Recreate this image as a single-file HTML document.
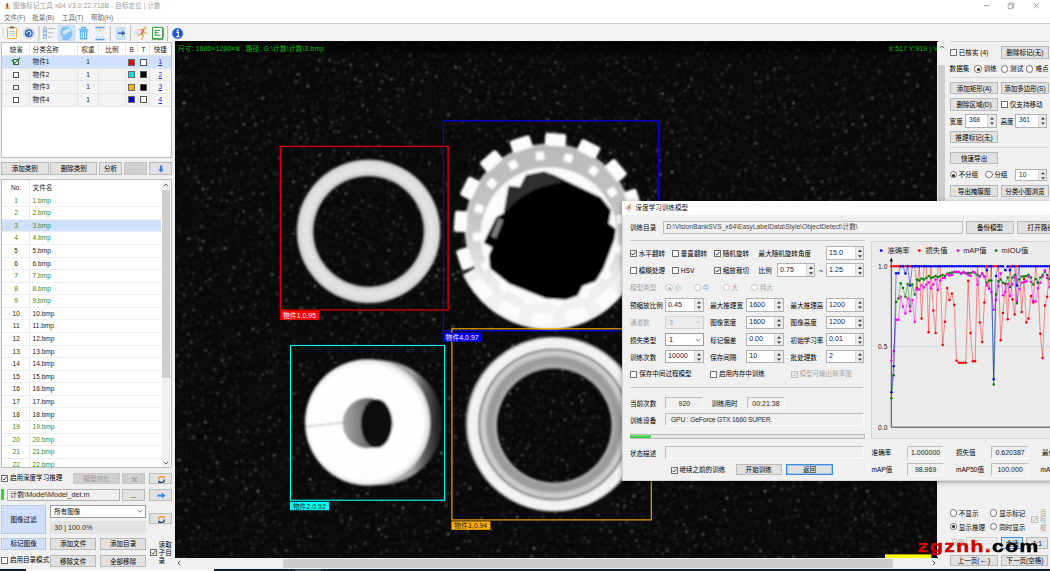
<!DOCTYPE html>
<html lang="zh-CN"><head><meta charset="utf-8"><title>图像标记工具</title>
<style>
*{box-sizing:border-box;margin:0;padding:0}
html,body{width:1050px;height:571px;overflow:hidden;background:#f0f0f0}
body{position:relative;font-family:"Liberation Sans","Noto Sans CJK SC",sans-serif;font-size:6.56px;color:#000}
div{position:absolute;white-space:nowrap}
.t{white-space:nowrap}
.b{background:#e1e1e1;border:1px solid #b9b9b9;text-align:center;overflow:hidden}
.b.dis{background:#cfcfcf;border-color:#c6c6c6;color:#9c9c9c!important}
.b.hot{background:#d5e6fb;border-color:#3c8de0}
.b.foc{background:#e1e1e1;border-color:#3c8de0;box-shadow:inset 0 0 0 .5px #6aa7e8}
.b.blue{background:#cfe0fc;border:1px dotted #9fb6dc}
.ck{border:1px solid #4a4a4a;background:#fff}
.rd{border:1px solid #4a4a4a;background:#fff;border-radius:50%}
.sp{background:#fff;border:1px solid #b2b2b2;overflow:hidden}
.spb{right:0;top:0;width:8.8px;background:#e9e9e9;border-left:1px solid #d8d8d8}
.spb svg{position:absolute;left:0;top:0}
.cb{border:1px solid #9a9a9a;overflow:hidden}
.fd{border:1px solid #bdbdbd;border-right-color:#fafafa;border-bottom-color:#fafafa;overflow:hidden}
svg{position:absolute;overflow:visible}
</style></head><body>
<div style="left:0px;top:0px;width:1050px;height:23.5px;background:#fff"></div>
<svg style="left:3px;top:1.5px" width="9" height="9" viewBox="0 0 9 9"><path d="M1 6.2 L4.4 7.8 L8 6.2 L4.4 5 Z" fill="#d8b98a"/><path d="M3.2 1 L5.2 1.6 L5.4 5.4 L3.6 5.8 Z" fill="#d8342a"/><path d="M2.6 3.2 L4 2.8 L4 5.6 L2.8 5.2 Z" fill="#f08a2a"/></svg>
<div class="t" style="left:13px;top:1.48px;height:9.84px;line-height:9.84px;font-size:6.56px;color:#9a9a9a;letter-spacing:.12px;">图像标记工具 x64 V3.0.22.718B - 目标定位 | 计数</div>
<svg style="left:975px;top:0" width="75" height="12" viewBox="0 0 75 12"><path d="M9 5.6 H14.6" stroke="#8a8a8a" stroke-width=".8" fill="none"/><path d="M33.2 4.2 H37.6 V8.6 H33.2 Z M34.4 4.2 V3 H38.8 V7.4 H37.6" stroke="#8a8a8a" stroke-width=".7" fill="none"/><path d="M58.8 3 L64 8.2 M64 3 L58.8 8.2" stroke="#8a8a8a" stroke-width=".8" fill="none"/></svg>
<div class="t" style="left:4px;top:12.98px;height:9.84px;line-height:9.84px;font-size:6.56px;color:#666;">文件(F)</div>
<div class="t" style="left:32.3px;top:12.98px;height:9.84px;line-height:9.84px;font-size:6.56px;color:#666;">批量(B)</div>
<div class="t" style="left:62px;top:12.98px;height:9.84px;line-height:9.84px;font-size:6.56px;color:#666;">工具(T)</div>
<div class="t" style="left:91px;top:12.98px;height:9.84px;line-height:9.84px;font-size:6.56px;color:#666;">帮助(H)</div>
<div style="left:0px;top:23px;width:1050px;height:1px;background:#cacaca"></div>
<div style="left:0px;top:24.3px;width:1050px;height:17.5px;background:#f3f3f3"></div>
<svg style="left:0;top:24px" width="190" height="18" viewBox="0 0 190 18">
<g fill="#b5b5b5"><rect x="2.6" y="3.5" width="1" height="1"/><rect x="2.6" y="5.7" width="1" height="1"/><rect x="2.6" y="7.9" width="1" height="1"/><rect x="2.6" y="10.1" width="1" height="1"/><rect x="2.6" y="12.3" width="1" height="1"/></g>
<!-- clipboard -->
<rect x="7.6" y="3.6" width="8.8" height="11" rx=".8" fill="#fdf7e6" stroke="#e0a83a" stroke-width="1"/>
<rect x="10" y="2.6" width="4" height="2" rx=".6" fill="#6b6b6b"/>
<path d="M9.6 7.5 H10.8 M11.8 7.5 H14.4 M9.6 9.7 H10.8 M11.8 9.7 H14.4 M9.6 11.9 H10.8 M11.8 11.9 H14.4" stroke="#6f9fd0" stroke-width=".8"/>
<!-- refresh disc -->
<circle cx="28.8" cy="9.4" r="5.6" fill="#e4e4e4" stroke="#c6c6c6" stroke-width=".6"/>
<circle cx="28.8" cy="9.2" r="4" fill="#2c63c7"/>
<path d="M26.8 9.6 A2.1 2.1 0 1 1 29 11.4" stroke="#fff" stroke-width="1" fill="none"/>
<path d="M39 2 V17" stroke="#b4b4b4" stroke-width=".9"/>
<!-- list -->
<g fill="#d6e6f8" stroke="#7aa7dc" stroke-width=".7"><rect x="43.4" y="3.2" width="3.2" height="3"/><rect x="43.4" y="7.4" width="3.2" height="3"/><rect x="43.4" y="11.6" width="3.2" height="3"/></g>
<path d="M48 4.6 H55 M48 8.8 H53.6 M48 13 H52" stroke="#a9a9a9" stroke-width=".8"/>
<!-- head (selected) -->
<rect x="58.4" y="1.4" width="16.4" height="15.6" fill="#cfe4fb" stroke="#8fb8e6" stroke-width=".6" stroke-dasharray="1 .8"/>
<path d="M66.2 2.6 C62 2.6 60 5.6 60.4 8.8 C60.6 10.8 62 12 62.6 13.4 L62.6 16 L69.6 16 L69.6 14 L71.4 13.8 L71.6 11.6 L73 10.6 L71.8 8.6 C71.8 5 69.6 2.6 66.2 2.6 Z" fill="#86bff2"/>
<circle cx="64.6" cy="8.6" r="2" fill="#d3e8fb"/><circle cx="66.8" cy="7.2" r="2" fill="#d3e8fb"/><circle cx="69" cy="6" r="1.8" fill="#d3e8fb"/>
<!-- trash -->
<path d="M78.8 5.2 H88.4 M81.8 5.2 V3.4 H85.4 V5.2" stroke="#4fb0f4" stroke-width="1.1" fill="none"/>
<path d="M79.6 6.2 H87.6 L87 15.6 H80.2 Z" fill="#5ab6f6"/>
<path d="M81.8 7.8 V14 M83.6 7.8 V14 M85.4 7.8 V14" stroke="#d8eefc" stroke-width=".9"/>
<!-- hourglass -->
<path d="M95.4 3.4 H104.6 M95.4 15.4 H104.6" stroke="#5a9ede" stroke-width="1.5"/>
<path d="M96 4.2 H104 C104 7 101.6 8 101.6 9.4 C101.6 10.8 104 11.8 104 14.6 H96 C96 11.8 98.4 10.8 98.4 9.4 C98.4 8 96 7 96 4.2 Z" fill="#f4f8fd" stroke="#a9c8ea" stroke-width=".6"/>
<path d="M98 5.6 H102 L100 8 Z" fill="#f0b8a8"/>
<path d="M97.4 14 C97.8 12.6 99 12 100 11.6 C101 12 102.2 12.6 102.6 14 Z" fill="#dfeaf6"/>
<path d="M110.4 2 V17" stroke="#b4b4b4" stroke-width=".9"/>
<!-- export -->
<rect x="116.2" y="3.2" width="8.6" height="12" fill="#cfe3f8" stroke="#a9cbef" stroke-width=".6"/>
<path d="M117.8 9.2 H122.6" stroke="#3a66b0" stroke-width="1.5"/><path d="M122 6.6 L125.4 9.2 L122 11.8 Z" fill="#3a66b0"/>
<path d="M130.6 2 V17" stroke="#b4b4b4" stroke-width=".9"/>
<!-- runner -->
<path d="M134.4 6.6 H139.4 V11 H134.4 Z" fill="#d4dde8"/>
<circle cx="145" cy="4" r="1.4" fill="#e8c266"/>
<path d="M139 5.8 L143 5.4 L144.4 8.4 L146.6 9.4 M143 5.6 L141.4 9.8 L143.4 11.8 L141.6 15.2 M141.4 9.8 L138.6 11.6" stroke="#e6b84e" stroke-width="1.3" fill="none" stroke-linecap="round"/>
<path d="M143.2 6 L141.8 9.6" stroke="#e8687a" stroke-width="2.2" stroke-linecap="round"/>
<!-- green doc -->
<path d="M152.6 3.4 H162.6 V14.6 H152.6 Z" fill="#fff" stroke="#1e8a2e" stroke-width=".9"/>
<path d="M152.6 12.4 V15.6 H163.4 M163.6 4.4 V14" stroke="#1e8a2e" stroke-width=".7" fill="none"/>
<path d="M155 6.4 H160.4 M155 8.8 H158.6 M155 11.2 H160.4 M155.2 6.4 V11.2" stroke="#1e8a2e" stroke-width=".9"/>
<path d="M167.6 2 V17" stroke="#b4b4b4" stroke-width=".9"/>
<!-- info -->
<circle cx="177.6" cy="9.4" r="5.3" fill="#1e55c8"/><circle cx="177.6" cy="9.4" r="5.3" fill="none" stroke="#6d9ae6" stroke-width=".7"/>
<circle cx="177.6" cy="6.4" r="1" fill="#fff"/><path d="M176.4 8.4 H178.4 V12.4 M176.2 12.6 H179.4" stroke="#fff" stroke-width="1.1" fill="none"/>
</svg>
<div style="left:1px;top:41.6px;width:170.6px;height:116.2px;background:#fff;border:1px solid #b8bec8"></div>
<div style="left:2px;top:68.4px;width:168.6px;height:37.6px;background:#f4f4f4"></div>
<div style="left:29px;top:42.6px;width:1px;height:63.4px;background:#e4e4e4"></div>
<div style="left:77px;top:42.6px;width:1px;height:63.4px;background:#e4e4e4"></div>
<div style="left:98px;top:42.6px;width:1px;height:63.4px;background:#e4e4e4"></div>
<div style="left:125px;top:42.6px;width:1px;height:63.4px;background:#e4e4e4"></div>
<div style="left:137px;top:42.6px;width:1px;height:63.4px;background:#e4e4e4"></div>
<div style="left:149px;top:42.6px;width:1px;height:63.4px;background:#e4e4e4"></div>
<div style="left:2px;top:55.28px;width:168.6px;height:1px;background:#e6e6e6"></div>
<div style="left:2px;top:67.86px;width:168.6px;height:1px;background:#e6e6e6"></div>
<div style="left:2px;top:80.44px;width:168.6px;height:1px;background:#e6e6e6"></div>
<div style="left:2px;top:93.02px;width:168.6px;height:1px;background:#e6e6e6"></div>
<div style="left:2px;top:105.6px;width:168.6px;height:1px;background:#e6e6e6"></div>
<div style="left:2px;top:55.9px;width:168.6px;height:12.2px;background:#cfe0fd"></div>
<div class="t" style="left:2.8px;top:44.68px;height:9.84px;line-height:9.84px;font-size:6.56px;color:#222;width:26.8px;text-align:center;">缺省</div>
<div class="t" style="left:32.6px;top:44.68px;height:9.84px;line-height:9.84px;font-size:6.56px;color:#222;">分类名称</div>
<div class="t" style="left:77.6px;top:44.68px;height:9.84px;line-height:9.84px;font-size:6.56px;color:#222;width:21px;text-align:center;">权重</div>
<div class="t" style="left:98.5px;top:44.68px;height:9.84px;line-height:9.84px;font-size:6.56px;color:#222;width:27px;text-align:center;">比例</div>
<div class="t" style="left:125.8px;top:44.68px;height:9.84px;line-height:9.84px;font-size:6.56px;color:#222;width:12px;text-align:center;">B</div>
<div class="t" style="left:137.6px;top:44.68px;height:9.84px;line-height:9.84px;font-size:6.56px;color:#222;width:12px;text-align:center;">T</div>
<div class="t" style="left:149.8px;top:44.68px;height:9.84px;line-height:9.84px;font-size:6.56px;color:#222;width:21px;text-align:center;">快捷</div>
<div style="left:13px;top:59.4px;width:5.6px;height:5.6px;border:1px solid #555;background:#fff"></div>
<svg style="left:11.4px;top:56.9px" width="10" height="8" viewBox="0 0 10 8"><path d="M.6 3 L3.6 6.4 L9.2 .6" fill="none" stroke="#0a8a1e" stroke-width="1.2"/></svg>
<div class="t" style="left:32.6px;top:57.18px;height:9.84px;line-height:9.84px;font-size:6.56px;color:#222;">物件1</div>
<div class="t" style="left:77.6px;top:57.18px;height:9.84px;line-height:9.84px;font-size:6.56px;color:#222;width:21px;text-align:center;">1</div>
<div style="left:128.3px;top:58.5px;width:7.2px;height:7.2px;background:#f00000;border:1px solid #6a6a6a"></div>
<div style="left:140px;top:58.5px;width:7.2px;height:7.2px;background:#fff;border:1px solid #555"></div>
<div class="t" style="left:149.8px;top:57.18px;height:9.84px;line-height:9.84px;font-size:6.56px;color:#2222cc;width:21px;text-align:center;"><u>1</u></div>
<div style="left:13px;top:71.98px;width:5.6px;height:5.6px;border:1px solid #555;background:#fff"></div>
<div class="t" style="left:32.6px;top:69.76px;height:9.84px;line-height:9.84px;font-size:6.56px;color:#222;">物件2</div>
<div class="t" style="left:77.6px;top:69.76px;height:9.84px;line-height:9.84px;font-size:6.56px;color:#222;width:21px;text-align:center;">1</div>
<div style="left:128.3px;top:71.08px;width:7.2px;height:7.2px;background:#00e8e8;border:1px solid #6a6a6a"></div>
<div style="left:140px;top:71.08px;width:7.2px;height:7.2px;background:#000;border:1px solid #555"></div>
<div class="t" style="left:149.8px;top:69.76px;height:9.84px;line-height:9.84px;font-size:6.56px;color:#2222cc;width:21px;text-align:center;"><u>2</u></div>
<div style="left:13px;top:84.56px;width:5.6px;height:5.6px;border:1px solid #555;background:#fff"></div>
<div class="t" style="left:32.6px;top:82.34px;height:9.84px;line-height:9.84px;font-size:6.56px;color:#222;">物件3</div>
<div class="t" style="left:77.6px;top:82.34px;height:9.84px;line-height:9.84px;font-size:6.56px;color:#222;width:21px;text-align:center;">1</div>
<div style="left:128.3px;top:83.66px;width:7.2px;height:7.2px;background:#ffb400;border:1px solid #6a6a6a"></div>
<div style="left:140px;top:83.66px;width:7.2px;height:7.2px;background:#000;border:1px solid #555"></div>
<div class="t" style="left:149.8px;top:82.34px;height:9.84px;line-height:9.84px;font-size:6.56px;color:#2222cc;width:21px;text-align:center;"><u>3</u></div>
<div style="left:13px;top:97.14px;width:5.6px;height:5.6px;border:1px solid #555;background:#fff"></div>
<div class="t" style="left:32.6px;top:94.92px;height:9.84px;line-height:9.84px;font-size:6.56px;color:#222;">物件4</div>
<div class="t" style="left:77.6px;top:94.92px;height:9.84px;line-height:9.84px;font-size:6.56px;color:#222;width:21px;text-align:center;">1</div>
<div style="left:128.3px;top:96.24px;width:7.2px;height:7.2px;background:#0000f0;border:1px solid #6a6a6a"></div>
<div style="left:140px;top:96.24px;width:7.2px;height:7.2px;background:#fff;border:1px solid #555"></div>
<div class="t" style="left:149.8px;top:94.92px;height:9.84px;line-height:9.84px;font-size:6.56px;color:#2222cc;width:21px;text-align:center;"><u>4</u></div>
<div class="b " style="left:1px;top:162.2px;width:47.6px;height:12.4px;line-height:11.4px;color:#000">添加类别</div>
<div class="b " style="left:50.2px;top:162.2px;width:47.2px;height:12.4px;line-height:11.4px;color:#000">删除类别</div>
<div class="b " style="left:99.2px;top:162.2px;width:22.8px;height:12.4px;line-height:11.4px;color:#000">分析</div>
<div class="b dis" style="left:124px;top:162.2px;width:22.8px;height:12.4px;line-height:11.4px;color:#000"><svg style="left:8.4px;top:2px" width="6" height="8" viewBox="0 0 6 8"><path d="M3 .6 L5.6 3.6 H4 V7.4 H2 V3.6 H.4 Z" fill="#dcdcdc" stroke="#b4b4b4" stroke-width=".5"/></svg></div>
<div class="b " style="left:148.8px;top:162.2px;width:23px;height:12.4px;line-height:11.4px;color:#000"><svg style="left:8.4px;top:1.6px" width="6" height="8" viewBox="0 0 6 8"><path d="M3 7.6 L.2 4.2 H1.9 V.4 H4.1 V4.2 H5.8 Z" fill="#3b78d8"/></svg></div>
<div style="left:1px;top:179.2px;width:170.6px;height:289.2px;background:#fff;border:1px solid #b8bec8"></div>
<div style="left:29px;top:180.2px;width:1px;height:287.2px;background:#e8e8e8"></div>
<div class="t" style="left:2.8px;top:182.88px;height:9.84px;line-height:9.84px;font-size:6.56px;color:#222;width:26.8px;text-align:center;">No.</div>
<div class="t" style="left:32.6px;top:182.88px;height:9.84px;line-height:9.84px;font-size:6.56px;color:#222;">文件名</div>
<div class="t" style="left:2.8px;top:195.68px;height:9.84px;line-height:9.84px;font-size:6.56px;color:#2e8a2e;width:26.8px;text-align:center;">1</div>
<div class="t" style="left:32.6px;top:195.68px;height:9.84px;line-height:9.84px;font-size:6.56px;color:#2e8a2e;">1.bmp</div>
<div style="left:2px;top:206.18px;width:159.4px;height:1px;background:#efefef"></div>
<div class="t" style="left:2.8px;top:208.26px;height:9.84px;line-height:9.84px;font-size:6.56px;color:#2e8a2e;width:26.8px;text-align:center;">2</div>
<div class="t" style="left:32.6px;top:208.26px;height:9.84px;line-height:9.84px;font-size:6.56px;color:#2e8a2e;">2.bmp</div>
<div style="left:2px;top:219.26px;width:159.4px;height:12.2px;background:#cfe0fd"></div>
<div style="left:2px;top:218.76px;width:159.4px;height:1px;background:#efefef"></div>
<div class="t" style="left:2.8px;top:220.84px;height:9.84px;line-height:9.84px;font-size:6.56px;color:#2e8a2e;width:26.8px;text-align:center;">3</div>
<div class="t" style="left:32.6px;top:220.84px;height:9.84px;line-height:9.84px;font-size:6.56px;color:#2e8a2e;">3.bmp</div>
<div style="left:2px;top:231.34px;width:159.4px;height:1px;background:#efefef"></div>
<div class="t" style="left:2.8px;top:233.42px;height:9.84px;line-height:9.84px;font-size:6.56px;color:#2e8a2e;width:26.8px;text-align:center;">4</div>
<div class="t" style="left:32.6px;top:233.42px;height:9.84px;line-height:9.84px;font-size:6.56px;color:#2e8a2e;">4.bmp</div>
<div style="left:2px;top:243.92px;width:159.4px;height:1px;background:#efefef"></div>
<div class="t" style="left:2.8px;top:246px;height:9.84px;line-height:9.84px;font-size:6.56px;color:#222;width:26.8px;text-align:center;">5</div>
<div class="t" style="left:32.6px;top:246px;height:9.84px;line-height:9.84px;font-size:6.56px;color:#222;">5.bmp</div>
<div style="left:2px;top:256.5px;width:159.4px;height:1px;background:#efefef"></div>
<div class="t" style="left:2.8px;top:258.58px;height:9.84px;line-height:9.84px;font-size:6.56px;color:#222;width:26.8px;text-align:center;">6</div>
<div class="t" style="left:32.6px;top:258.58px;height:9.84px;line-height:9.84px;font-size:6.56px;color:#222;">6.bmp</div>
<div style="left:2px;top:269.08px;width:159.4px;height:1px;background:#efefef"></div>
<div class="t" style="left:2.8px;top:271.16px;height:9.84px;line-height:9.84px;font-size:6.56px;color:#2e8a2e;width:26.8px;text-align:center;">7</div>
<div class="t" style="left:32.6px;top:271.16px;height:9.84px;line-height:9.84px;font-size:6.56px;color:#2e8a2e;">7.bmp</div>
<div style="left:2px;top:281.66px;width:159.4px;height:1px;background:#efefef"></div>
<div class="t" style="left:2.8px;top:283.74px;height:9.84px;line-height:9.84px;font-size:6.56px;color:#2e8a2e;width:26.8px;text-align:center;">8</div>
<div class="t" style="left:32.6px;top:283.74px;height:9.84px;line-height:9.84px;font-size:6.56px;color:#2e8a2e;">8.bmp</div>
<div style="left:2px;top:294.24px;width:159.4px;height:1px;background:#efefef"></div>
<div class="t" style="left:2.8px;top:296.32px;height:9.84px;line-height:9.84px;font-size:6.56px;color:#2e8a2e;width:26.8px;text-align:center;">9</div>
<div class="t" style="left:32.6px;top:296.32px;height:9.84px;line-height:9.84px;font-size:6.56px;color:#2e8a2e;">9.bmp</div>
<div style="left:2px;top:306.82px;width:159.4px;height:1px;background:#efefef"></div>
<div class="t" style="left:2.8px;top:308.9px;height:9.84px;line-height:9.84px;font-size:6.56px;color:#222;width:26.8px;text-align:center;">10</div>
<div class="t" style="left:32.6px;top:308.9px;height:9.84px;line-height:9.84px;font-size:6.56px;color:#222;">10.bmp</div>
<div style="left:2px;top:319.4px;width:159.4px;height:1px;background:#efefef"></div>
<div class="t" style="left:2.8px;top:321.48px;height:9.84px;line-height:9.84px;font-size:6.56px;color:#222;width:26.8px;text-align:center;">11</div>
<div class="t" style="left:32.6px;top:321.48px;height:9.84px;line-height:9.84px;font-size:6.56px;color:#222;">11.bmp</div>
<div style="left:2px;top:331.98px;width:159.4px;height:1px;background:#efefef"></div>
<div class="t" style="left:2.8px;top:334.06px;height:9.84px;line-height:9.84px;font-size:6.56px;color:#222;width:26.8px;text-align:center;">12</div>
<div class="t" style="left:32.6px;top:334.06px;height:9.84px;line-height:9.84px;font-size:6.56px;color:#222;">12.bmp</div>
<div style="left:2px;top:344.56px;width:159.4px;height:1px;background:#efefef"></div>
<div class="t" style="left:2.8px;top:346.64px;height:9.84px;line-height:9.84px;font-size:6.56px;color:#222;width:26.8px;text-align:center;">13</div>
<div class="t" style="left:32.6px;top:346.64px;height:9.84px;line-height:9.84px;font-size:6.56px;color:#222;">13.bmp</div>
<div style="left:2px;top:357.14px;width:159.4px;height:1px;background:#efefef"></div>
<div class="t" style="left:2.8px;top:359.22px;height:9.84px;line-height:9.84px;font-size:6.56px;color:#222;width:26.8px;text-align:center;">14</div>
<div class="t" style="left:32.6px;top:359.22px;height:9.84px;line-height:9.84px;font-size:6.56px;color:#222;">14.bmp</div>
<div style="left:2px;top:369.72px;width:159.4px;height:1px;background:#efefef"></div>
<div class="t" style="left:2.8px;top:371.8px;height:9.84px;line-height:9.84px;font-size:6.56px;color:#222;width:26.8px;text-align:center;">15</div>
<div class="t" style="left:32.6px;top:371.8px;height:9.84px;line-height:9.84px;font-size:6.56px;color:#222;">15.bmp</div>
<div style="left:2px;top:382.3px;width:159.4px;height:1px;background:#efefef"></div>
<div class="t" style="left:2.8px;top:384.38px;height:9.84px;line-height:9.84px;font-size:6.56px;color:#222;width:26.8px;text-align:center;">16</div>
<div class="t" style="left:32.6px;top:384.38px;height:9.84px;line-height:9.84px;font-size:6.56px;color:#222;">16.bmp</div>
<div style="left:2px;top:394.88px;width:159.4px;height:1px;background:#efefef"></div>
<div class="t" style="left:2.8px;top:396.96px;height:9.84px;line-height:9.84px;font-size:6.56px;color:#222;width:26.8px;text-align:center;">17</div>
<div class="t" style="left:32.6px;top:396.96px;height:9.84px;line-height:9.84px;font-size:6.56px;color:#222;">17.bmp</div>
<div style="left:2px;top:407.46px;width:159.4px;height:1px;background:#efefef"></div>
<div class="t" style="left:2.8px;top:409.54px;height:9.84px;line-height:9.84px;font-size:6.56px;color:#222;width:26.8px;text-align:center;">18</div>
<div class="t" style="left:32.6px;top:409.54px;height:9.84px;line-height:9.84px;font-size:6.56px;color:#222;">18.bmp</div>
<div style="left:2px;top:420.04px;width:159.4px;height:1px;background:#efefef"></div>
<div class="t" style="left:2.8px;top:422.12px;height:9.84px;line-height:9.84px;font-size:6.56px;color:#2e8a2e;width:26.8px;text-align:center;">19</div>
<div class="t" style="left:32.6px;top:422.12px;height:9.84px;line-height:9.84px;font-size:6.56px;color:#2e8a2e;">19.bmp</div>
<div style="left:2px;top:432.62px;width:159.4px;height:1px;background:#efefef"></div>
<div class="t" style="left:2.8px;top:434.7px;height:9.84px;line-height:9.84px;font-size:6.56px;color:#2e8a2e;width:26.8px;text-align:center;">20</div>
<div class="t" style="left:32.6px;top:434.7px;height:9.84px;line-height:9.84px;font-size:6.56px;color:#2e8a2e;">20.bmp</div>
<div style="left:2px;top:445.2px;width:159.4px;height:1px;background:#efefef"></div>
<div class="t" style="left:2.8px;top:447.28px;height:9.84px;line-height:9.84px;font-size:6.56px;color:#2e8a2e;width:26.8px;text-align:center;">21</div>
<div class="t" style="left:32.6px;top:447.28px;height:9.84px;line-height:9.84px;font-size:6.56px;color:#2e8a2e;">21.bmp</div>
<div style="left:2px;top:457.78px;width:159.4px;height:1px;background:#efefef"></div>
<div class="t" style="left:2.8px;top:459.86px;height:9.84px;line-height:9.84px;font-size:6.56px;color:#2e8a2e;width:26.8px;text-align:center;">22</div>
<div class="t" style="left:32.6px;top:459.86px;height:9.84px;line-height:9.84px;font-size:6.56px;color:#2e8a2e;">22.bmp</div>
<div style="left:1px;top:467.4px;width:170.6px;height:1px;background:#b8bec8"></div>
<div style="left:161.6px;top:180.2px;width:9.2px;height:287.2px;background:#f0f0f0"></div>
<div style="left:162.2px;top:190.1px;width:7.7px;height:187.6px;background:#cdcdcd"></div>
<svg style="left:163.2px;top:182.6px" width="6" height="4" viewBox="0 0 6 4"><path d="M.8 3.2 L3 1 L5.2 3.2" fill="none" stroke="#555" stroke-width=".9"/></svg>
<svg style="left:163.2px;top:461.4px" width="6" height="4" viewBox="0 0 6 4"><path d="M.8 .8 L3 3 L5.2 .8" fill="none" stroke="#555" stroke-width=".9"/></svg>
<div class="ck" style="left:0.9px;top:474.7px;width:7px;height:7px;border-color:#707070;background:#fff"><svg viewBox="0 0 7 7" width="7" height="7" style="position:absolute;left:-1px;top:-1px"><path d="M1.4 3.6 L2.9 5.1 L5.7 1.7" fill="none" stroke="#222" stroke-width="0.9"/></svg></div>
<div class="t" style="left:9.9px;top:473.28px;height:9.84px;line-height:9.84px;font-size:6.56px;color:#000;">启用深度学习推理</div>
<div class="b dis" style="left:73px;top:472.8px;width:47px;height:11.4px;line-height:10.4px;color:#000">模型对比</div>
<div class="b dis" style="left:122px;top:472.8px;width:22.6px;height:11.4px;line-height:10.4px;color:#000"><svg style="left:7.6px;top:1.8px" width="7" height="7" viewBox="0 0 7 7"><path d="M1 1 L6 6 M6 1 L1 6" stroke="#a8a8a8" stroke-width="1.5"/></svg></div>
<div class="b " style="left:149px;top:472.8px;width:22.6px;height:11.4px;line-height:10.4px;color:#000"><svg style="left:6.6px;top:1.2px" width="9" height="9" viewBox="0 0 9 9"><path d="M1.6 4.8 A3 3 0 0 1 7 2.8" stroke="#e9a23b" stroke-width="1.5" fill="none"/><path d="M7.9 1 L7.7 4 L5.2 2.8 Z" fill="#e9a23b"/><path d="M7.4 4.6 A3 3 0 0 1 2 6.4" stroke="#3d4a80" stroke-width="1.5" fill="none"/><path d="M1.1 8.2 L1.3 5.2 L3.8 6.4 Z" fill="#3d4a80"/></svg></div>
<div style="left:1px;top:489.2px;width:2.8px;height:11.2px;background:#1ee01e"></div>
<div class="fd" style="left:6.8px;top:488.6px;width:113.4px;height:12.2px;line-height:9px;text-align:left;color:#2a2a2a;background:#f0f0f0;padding:0 2.2px;font-size:7.2px;border-color:#b0b0b0">计数\Model\Model_det.m</div>
<div class="b " style="left:122px;top:488.8px;width:22.6px;height:12.2px;line-height:11.2px;color:#000">...</div>
<div class="b " style="left:149px;top:488.8px;width:22.6px;height:12.2px;line-height:11.2px;color:#000"><svg style="left:7px;top:2.4px" width="9" height="7" viewBox="0 0 9 7"><path d="M.4 2.4 H4.8 V.4 L8.6 3.5 L4.8 6.6 V4.6 H.4 Z" fill="#3f86e0"/></svg></div>
<div class="b blue" style="left:1.2px;top:505.4px;width:44.8px;height:28.4px;line-height:27.4px;color:#000">图像过滤</div>
<div class="cb" style="left:50.2px;top:504.8px;width:95.8px;height:13.2px;background:#fff;border-color:#9a9a9a"><span style="position:absolute;left:3px;top:0;line-height:11px;color:#000">所有图像</span><svg viewBox="0 0 8 8" width="6" height="6" style="position:absolute;right:2.2px;top:2.6px"><path d="M1.2 2.8 L4 5.6 L6.8 2.8" fill="none" stroke="#555" stroke-width="1"/></svg></div>
<div class="fd" style="left:50.2px;top:521px;width:95.8px;height:12.8px;line-height:12.4px;text-align:left;color:#2a2a2a;background:#e4e4e4;padding:0 3px;font-size:7.2px;border-color:#e4e4e4">30 | 100.0%</div>
<div class="b " style="left:149px;top:512.6px;width:22.6px;height:11.8px;line-height:10.8px;color:#000"><svg style="left:6.6px;top:1.2px" width="9" height="9" viewBox="0 0 9 9"><path d="M1.6 4.8 A3 3 0 0 1 7 2.8" stroke="#e9a23b" stroke-width="1.5" fill="none"/><path d="M7.9 1 L7.7 4 L5.2 2.8 Z" fill="#e9a23b"/><path d="M7.4 4.6 A3 3 0 0 1 2 6.4" stroke="#3d4a80" stroke-width="1.5" fill="none"/><path d="M1.1 8.2 L1.3 5.2 L3.8 6.4 Z" fill="#3d4a80"/></svg></div>
<div class="b blue" style="left:1.2px;top:538px;width:44.8px;height:11.8px;line-height:10.8px;color:#000">标记图像</div>
<div class="b " style="left:50.2px;top:538px;width:45.8px;height:11.8px;line-height:10.8px;color:#000">添加文件</div>
<div class="b " style="left:100.2px;top:538px;width:45.8px;height:11.8px;line-height:10.8px;color:#000">添加目录</div>
<div class="ck" style="left:0.9px;top:556.9px;width:7px;height:7px;border-color:#707070;background:#fff"></div>
<div class="t" style="left:9.9px;top:555.48px;height:9.84px;line-height:9.84px;font-size:6.56px;color:#000;">启用目录模式</div>
<div class="b " style="left:50.2px;top:554.6px;width:45.8px;height:12px;line-height:11px;color:#000">移除文件</div>
<div class="b " style="left:100.2px;top:554.6px;width:45.8px;height:12px;line-height:11px;color:#000">全部移除</div>
<div class="ck" style="left:150px;top:548.9px;width:7px;height:7px;border-color:#707070;background:#fff"><svg viewBox="0 0 7 7" width="7" height="7" style="position:absolute;left:-1px;top:-1px"><path d="M1.4 3.6 L2.9 5.1 L5.7 1.7" fill="none" stroke="#222" stroke-width="0.9"/></svg></div>
<div class="t" style="left:158.6px;top:540.08px;height:9.84px;line-height:9.84px;font-size:6.56px;color:#000;">读取</div>
<div class="t" style="left:158.6px;top:548.18px;height:9.84px;line-height:9.84px;font-size:6.56px;color:#000;">子目</div>
<div class="t" style="left:158.6px;top:556.28px;height:9.84px;line-height:9.84px;font-size:6.56px;color:#000;">录</div>
<svg style="left:0;top:0" width="1050" height="571" viewBox="0 0 1050 571">
<defs>
<filter id="nz" x="0" y="0" width="100%" height="100%" color-interpolation-filters="sRGB">
<feTurbulence type="fractalNoise" baseFrequency="0.42" numOctaves="1" seed="7" result="n"/>
<feColorMatrix in="n" type="matrix" values="8 0 0 0 -5.45  8 0 0 0 -5.45  8 0 0 0 -5.45  0 0 0 0 1" result="s0"/>
<feGaussianBlur in="s0" stdDeviation="0.8" result="s"/>
<feColorMatrix in="n" type="matrix" values="0 0.2 0 0 -0.098  0 0.2 0 0 -0.098  0 0.2 0 0 -0.098  0 0 0 0 1" result="m0"/>
<feGaussianBlur in="m0" stdDeviation="0.8" result="m"/>
<feFlood flood-color="#080808" result="f"/>
<feComposite in="s" in2="m" operator="arithmetic" k1="0" k2="1" k3="1" k4="0" result="sm"/>
<feComposite in="sm" in2="f" operator="arithmetic" k1="0" k2="1" k3="1" k4="0"/>
</filter>
<filter id="b1"><feGaussianBlur stdDeviation="0.8"/></filter>
<filter id="b3"><feGaussianBlur stdDeviation="1.0"/></filter>
<filter id="b2"><feGaussianBlur stdDeviation="1.4"/></filter>
<linearGradient id="vig" x1="0" y1="41.8" x2="0" y2="57.8" gradientUnits="userSpaceOnUse"><stop offset="0" stop-color="#000" stop-opacity=".75"/><stop offset="0.6" stop-color="#000" stop-opacity=".5"/><stop offset="1" stop-color="#000" stop-opacity="0"/></linearGradient>
<clipPath id="wallclip"><path d="M549 226 L372 326 V400 H726 V326 Z"/></clipPath>
<clipPath id="imgclip"><rect x="175.2" y="41.8" width="762" height="516.1"/></clipPath>
<radialGradient id="g1" cx="368.6" cy="231.4" r="71.9" gradientUnits="userSpaceOnUse">
<stop offset="0.765" stop-color="#808080"/><stop offset="0.785" stop-color="#cccccc"/><stop offset="0.85" stop-color="#e4e4e4"/>
<stop offset="0.95" stop-color="#dedede"/><stop offset="0.985" stop-color="#c8c8c8"/><stop offset="1" stop-color="#808080"/></radialGradient>
<linearGradient id="g2side" x1="412" y1="0" x2="443" y2="0" gradientUnits="userSpaceOnUse">
<stop offset="0" stop-color="#a0a0a0"/><stop offset="0.4" stop-color="#5c5c5c"/><stop offset="0.75" stop-color="#303030"/><stop offset="1" stop-color="#141414"/></linearGradient>
<radialGradient id="g2" cx="366" cy="422.5" r="64" gradientUnits="userSpaceOnUse">
<stop offset="0" stop-color="#ffffff"/><stop offset="0.9" stop-color="#fdfdfd"/><stop offset="1" stop-color="#d8d8d8"/></radialGradient>
<linearGradient id="g2h" x1="343" y1="0" x2="372" y2="0" gradientUnits="userSpaceOnUse">
<stop offset="0" stop-color="#a8a8a8"/><stop offset="1" stop-color="#606060"/></linearGradient>
<radialGradient id="g3" cx="554.2" cy="424.5" r="88.5" gradientUnits="userSpaceOnUse">
<stop offset="0.64" stop-color="#8a8a8a"/><stop offset="0.655" stop-color="#b2b2b2"/><stop offset="0.70" stop-color="#9c9c9c"/><stop offset="0.762" stop-color="#9a9a9a"/>
<stop offset="0.775" stop-color="#c6c6c6"/><stop offset="0.832" stop-color="#cecece"/><stop offset="0.842" stop-color="#6e6e6e"/><stop offset="0.852" stop-color="#787878"/>
<stop offset="0.865" stop-color="#f0f0f0"/><stop offset="0.965" stop-color="#f4f4f4"/><stop offset="0.982" stop-color="#a8a8a8"/><stop offset="1" stop-color="#7c7c7c"/></radialGradient>
<linearGradient id="g4body" x1="0" y1="140" x2="0" y2="320" gradientUnits="userSpaceOnUse">
<stop offset="0" stop-color="#b8b8b8"/><stop offset="0.45" stop-color="#c6c6c6"/><stop offset="0.75" stop-color="#e8e8e8"/><stop offset="1" stop-color="#f6f6f6"/></linearGradient>
<linearGradient id="g4in" x1="500" y1="170" x2="600" y2="290" gradientUnits="userSpaceOnUse">
<stop offset="0" stop-color="#8e8e8e"/><stop offset="0.5" stop-color="#3a3a3a"/><stop offset="1" stop-color="#d0d0d0"/></linearGradient>
</defs>
<rect x="175.2" y="41.8" width="762.0" height="516.1" filter="url(#nz)" fill="#0d0d0d"/>
<rect x="175.2" y="41.8" width="762" height="16" fill="url(#vig)"/>
<g clip-path="url(#imgclip)">
<g filter="url(#b1)"><path fill="url(#g1)" fill-rule="evenodd" d="M296.7 231.4 a71.9 71.9 0 1 0 143.8 0 a71.9 71.9 0 1 0 -143.8 0 Z M313.6 231.4 a55 55 0 1 0 110 0 a55 55 0 1 0 -110 0 Z"/></g>
<g filter="url(#b3)">
<ellipse cx="549" cy="233" rx="95.5" ry="96.5" fill="#f1f1f1" clip-path="url(#wallclip)"/>
<circle cx="549.0" cy="228.0" r="84.5" fill="url(#g4body)"/>
<rect x="-10.5" y="-6.4" width="21" height="12.8" rx="2.4" fill="#fbfbfb" transform="translate(555.5 139.7) rotate(4.2)"/>
<rect x="-10.5" y="-6.4" width="21" height="12.8" rx="2.4" fill="#fbfbfb" transform="translate(588.8 148.9) rotate(26.7)"/>
<rect x="-10.5" y="-6.4" width="21" height="12.8" rx="2.4" fill="#fbfbfb" transform="translate(616.0 170.2) rotate(49.2)"/>
<rect x="-10.5" y="-6.4" width="21" height="12.8" rx="2.4" fill="#fbfbfb" transform="translate(633.0 200.2) rotate(71.7)"/>
<rect x="-10.5" y="-6.4" width="21" height="12.8" rx="2.4" fill="#fbfbfb" transform="translate(637.3 234.5) rotate(94.2)"/>
<rect x="-10.5" y="-6.4" width="21" height="12.8" rx="2.4" fill="#fbfbfb" transform="translate(628.1 270.8) rotate(116.7)"/>
<rect x="-10.5" y="-6.4" width="21" height="12.8" rx="2.4" fill="#fbfbfb" transform="translate(606.8 298.0) rotate(139.2)"/>
<rect x="-10.5" y="-6.4" width="21" height="12.8" rx="2.4" fill="#fbfbfb" transform="translate(576.8 315.0) rotate(161.7)"/>
<rect x="-10.5" y="-6.4" width="21" height="12.8" rx="2.4" fill="#fbfbfb" transform="translate(542.5 319.3) rotate(184.2)"/>
<rect x="-10.5" y="-6.4" width="21" height="12.8" rx="2.4" fill="#fbfbfb" transform="translate(509.2 310.1) rotate(206.7)"/>
<rect x="-10.5" y="-6.4" width="21" height="12.8" rx="2.4" fill="#fbfbfb" transform="translate(482.0 288.8) rotate(229.2)"/>
<rect x="-10.5" y="-6.4" width="21" height="12.8" rx="2.4" fill="#fbfbfb" transform="translate(465.0 258.8) rotate(251.7)"/>
<rect x="-10.5" y="-6.4" width="21" height="12.8" rx="2.4" fill="#fbfbfb" transform="translate(460.7 221.5) rotate(274.2)"/>
<rect x="-10.5" y="-6.4" width="21" height="12.8" rx="2.4" fill="#fbfbfb" transform="translate(469.9 188.2) rotate(296.7)"/>
<rect x="-10.5" y="-6.4" width="21" height="12.8" rx="2.4" fill="#fbfbfb" transform="translate(491.2 161.0) rotate(319.2)"/>
<rect x="-10.5" y="-6.4" width="21" height="12.8" rx="2.4" fill="#fbfbfb" transform="translate(521.2 144.0) rotate(341.7)"/>
<rect x="-4.2" y="-4.2" width="8.4" height="8.4" rx="1" fill="#fdfdfd" transform="translate(568.3 158.1) rotate(15.4)"/>
<rect x="-4.2" y="-4.2" width="8.4" height="8.4" rx="1" fill="#fdfdfd" transform="translate(593.6 170.8) rotate(38.0)"/>
<rect x="-4.2" y="-4.2" width="8.4" height="8.4" rx="1" fill="#fdfdfd" transform="translate(612.1 192.2) rotate(60.5)"/>
<rect x="-4.2" y="-4.2" width="8.4" height="8.4" rx="1" fill="#fdfdfd" transform="translate(621.0 219.1) rotate(83.0)"/>
<rect x="-4.2" y="-4.2" width="8.4" height="8.4" rx="1" fill="#fdfdfd" transform="translate(618.9 249.3) rotate(105.5)"/>
<rect x="-4.2" y="-4.2" width="8.4" height="8.4" rx="1" fill="#fdfdfd" transform="translate(606.2 274.6) rotate(128.0)"/>
<rect x="-4.2" y="-4.2" width="8.4" height="8.4" rx="1" fill="#fdfdfd" transform="translate(584.8 293.1) rotate(150.4)"/>
<rect x="-4.2" y="-4.2" width="8.4" height="8.4" rx="1" fill="#fdfdfd" transform="translate(557.9 302.0) rotate(172.9)"/>
<rect x="-4.2" y="-4.2" width="8.4" height="8.4" rx="1" fill="#fdfdfd" transform="translate(529.7 299.9) rotate(195.4)"/>
<rect x="-4.2" y="-4.2" width="8.4" height="8.4" rx="1" fill="#fdfdfd" transform="translate(504.4 287.2) rotate(217.9)"/>
<rect x="-4.2" y="-4.2" width="8.4" height="8.4" rx="1" fill="#fdfdfd" transform="translate(485.9 265.8) rotate(240.4)"/>
<rect x="-4.2" y="-4.2" width="8.4" height="8.4" rx="1" fill="#fdfdfd" transform="translate(477.0 236.9) rotate(262.9)"/>
<rect x="-4.2" y="-4.2" width="8.4" height="8.4" rx="1" fill="#fdfdfd" transform="translate(479.1 208.7) rotate(285.4)"/>
<rect x="-4.2" y="-4.2" width="8.4" height="8.4" rx="1" fill="#fdfdfd" transform="translate(491.8 183.4) rotate(307.9)"/>
<rect x="-4.2" y="-4.2" width="8.4" height="8.4" rx="1" fill="#fdfdfd" transform="translate(513.2 164.9) rotate(330.4)"/>
<rect x="-4.2" y="-4.2" width="8.4" height="8.4" rx="1" fill="#fdfdfd" transform="translate(540.1 156.0) rotate(352.9)"/>
<circle cx="549.0" cy="235.7" r="68.4" fill="#fafafa"/>
<path d="M526.6 176 L543.8 172.4 L553.6 176 L600.2 198.1 L610 210.4 L607.6 223.9 L614.9 229.3 L613.7 238.6 L602.7 268 L595.3 280.3 L581.8 285.2 L576.9 295 L565.9 298.7 L546.2 297.5 L509.4 282.8 L491 268 L489.8 255.8 L493.5 247.2 L484.9 242.3 L497.2 217.7 L504.5 214 L509.4 187 L520.5 188.3 Z" fill="#060606" stroke="#060606" stroke-width="2" stroke-linejoin="round"/>
<path d="M509.4 187 L520.5 188.3 L526.6 176 L543.8 172.4 L553.6 176 L563.4 182.2 Q538 185 520 198 Q510 206 504.5 214 Z" fill="#2e2e2e"/>
<path d="M491 236.2 L498.4 217.8 L503.3 220.2 L496 238.6 Z" fill="#7c7c7c"/>
</g>
<g filter="url(#b1)">
<ellipse cx="379.5" cy="422.6" rx="62.6" ry="62.4" fill="url(#g2side)"/>
<ellipse cx="367.6" cy="422.4" rx="62.6" ry="63.2" fill="url(#g2)"/>
<ellipse cx="367.6" cy="423" rx="25" ry="25.2" fill="url(#g2h)"/>
<ellipse cx="376.6" cy="423.4" rx="15.6" ry="24.4" fill="#080808"/>
<path d="M305.4 426.8 L343 422.6" stroke="#5a5a5a" stroke-width=".6"/>
</g>
<g filter="url(#b1)"><path fill="url(#g3)" fill-rule="evenodd" d="M465.5 424 a88.7 87.6 0 1 0 177.4 0 a88.7 87.6 0 1 0 -177.4 0 Z M496.9 425.7 a57.3 57 0 1 0 114.6 0 a57.3 57 0 1 0 -114.6 0 Z"/></g>
<rect x="280.3" y="146.3" width="167.8" height="163.7" fill="none" stroke="#ff0000" stroke-width="1.1"/>
<rect x="443.4" y="120.8" width="215.0" height="210.0" fill="none" stroke="#0000ff" stroke-width="1.1"/>
<rect x="290.5" y="345.5" width="154.10000000000002" height="154.7" fill="none" stroke="#00ffff" stroke-width="1.1"/>
<rect x="451.9" y="328.8" width="199.39999999999998" height="191.09999999999997" fill="none" stroke="#ffb000" stroke-width="1.1"/>
<rect x="280.2" y="310.6" width="39.0" height="9.399999999999977" fill="#ff0000"/>
<text x="282.9" y="317.8" font-size="6.8" letter-spacing=".08" fill="#fff">物件1,0.95</text>
<rect x="442.8" y="332.6" width="38.39999999999998" height="9.0" fill="#0000ff"/>
<text x="445.5" y="339.6" font-size="6.8" letter-spacing=".08" fill="#fff">物件4,0.97</text>
<rect x="290" y="501.8" width="39" height="8.399999999999977" fill="#00ffff"/>
<text x="292.7" y="508.5" font-size="6.8" letter-spacing=".08" fill="#1a1a1a">物件2,0.92</text>
<rect x="451.4" y="521.4" width="39.0" height="8.399999999999977" fill="#ffb000"/>
<text x="454.09999999999997" y="528.0999999999999" font-size="6.8" letter-spacing=".08" fill="#1a1a1a">物件3,0.94</text>
<text x="178" y="50.6" font-size="6.56" fill="#00c400" letter-spacing=".28">尺寸: 1600×1200×8&#160;&#160;&#160;路径: G:\计数\计数\3.bmp</text>
<text x="888.6" y="50.6" font-size="6.56" fill="#00c400" letter-spacing=".28">X:517 Y:919 | V</text>
<rect x="885" y="554.4" width="46.4" height="4" fill="#ffff00"/>
</g></svg>
<div style="left:937.2px;top:41.8px;width:8.6px;height:515.4px;background:#f0f0f0"></div>
<div style="left:937.8px;top:64.8px;width:7.6px;height:300px;background:#cdcdcd"></div>
<svg style="left:938.6px;top:44.6px" width="6" height="4" viewBox="0 0 6 4"><path d="M.8 3.2 L3 1 L5.2 3.2" fill="none" stroke="#555" stroke-width=".9"/></svg>
<div style="left:175.2px;top:557.9px;width:770.6px;height:10.7px;background:#f0f0f0"></div>
<div style="left:283px;top:558.6px;width:610px;height:9.2px;background:#cdcdcd"></div>
<svg style="left:176.8px;top:559.6px" width="4" height="6" viewBox="0 0 4 6"><path d="M3.2 .8 L1 3 L3.2 5.2" fill="none" stroke="#444" stroke-width=".9"/></svg>
<svg style="left:931.6px;top:559.6px" width="4" height="6" viewBox="0 0 4 6"><path d="M.8 .8 L3 3 L.8 5.2" fill="none" stroke="#444" stroke-width=".9"/></svg>
<div style="left:950px;top:41.2px;width:98.6px;height:1px;background:#d2d2d2"></div>
<div class="ck" style="left:950.2px;top:48.9px;width:7px;height:7px;border-color:#707070;background:#fff"></div>
<div class="t" style="left:958.8px;top:48.28px;height:9.84px;line-height:9.84px;font-size:6.56px;color:#000;">已核实 (4)</div>
<div class="b " style="left:1001.2px;top:46.2px;width:47.4px;height:12.4px;line-height:11.4px;color:#000">删除标记(无)</div>
<div class="t" style="left:949.6px;top:64.08px;height:9.84px;line-height:9.84px;font-size:6.56px;color:#000;">数据集</div>
<div class="rd" style="left:974.4px;top:65.4px;width:7.2px;height:7.2px;border-color:#707070"><i style="position:absolute;left:1.5px;top:1.5px;width:3.2px;height:3.2px;border-radius:50%;background:#222"></i></div>
<div class="t" style="left:983.7px;top:64.08px;height:9.84px;line-height:9.84px;font-size:6.56px;color:#000;">训练</div>
<div class="rd" style="left:1000.8px;top:65.4px;width:7.2px;height:7.2px;border-color:#707070"></div>
<div class="t" style="left:1010.1px;top:64.08px;height:9.84px;line-height:9.84px;font-size:6.56px;color:#000;">测试</div>
<div class="rd" style="left:1026.2px;top:65.4px;width:7.2px;height:7.2px;border-color:#707070"></div>
<div class="t" style="left:1035.5px;top:64.08px;height:9.84px;line-height:9.84px;font-size:6.56px;color:#000;">难点</div>
<div style="left:950px;top:77.2px;width:98.6px;height:1px;background:#d2d2d2"></div>
<div class="b " style="left:950.4px;top:82.2px;width:47.4px;height:12.2px;line-height:11.2px;color:#000">添加矩形(A)</div>
<div class="b " style="left:1001.2px;top:82.2px;width:47.4px;height:12.2px;line-height:11.2px;color:#000">添加多边形(S)</div>
<div class="b " style="left:950.4px;top:98.4px;width:47.4px;height:12.2px;line-height:11.2px;color:#000">删除区域(D)</div>
<div class="ck" style="left:1001.2px;top:100.9px;width:7px;height:7px;border-color:#707070;background:#fff"></div>
<div class="t" style="left:1009.8px;top:100.38px;height:9.84px;line-height:9.84px;font-size:6.56px;color:#000;">仅支持移动</div>
<div class="t" style="left:949.6px;top:116.98px;height:9.84px;line-height:9.84px;font-size:6.56px;color:#000;">宽度</div>
<div class="sp" style="left:965.4px;top:114.4px;width:31.8px;height:13.2px"><span style="position:absolute;left:2.6px;top:0px;line-height:10.8px;color:#1a1a4a;font-size:6.56px">368</span><div class="spb" style="height:11.2px"><svg viewBox="0 0 8 12" width="8" height="11.2" preserveAspectRatio="none"><path d="M2 4.8 L4 2.5 L6 4.8 Z M2 8 L4 10.3 L6 8 Z" fill="#333"/></svg></div></div>
<div class="t" style="left:1000.4px;top:116.98px;height:9.84px;line-height:9.84px;font-size:6.56px;color:#000;">高度</div>
<div class="sp" style="left:1015.4px;top:114.4px;width:32px;height:13.2px"><span style="position:absolute;left:2.6px;top:0px;line-height:10.8px;color:#1a1a4a;font-size:6.56px">361</span><div class="spb" style="height:11.2px"><svg viewBox="0 0 8 12" width="8" height="11.2" preserveAspectRatio="none"><path d="M2 4.8 L4 2.5 L6 4.8 Z M2 8 L4 10.3 L6 8 Z" fill="#333"/></svg></div></div>
<div class="b " style="left:950.4px;top:131px;width:47.4px;height:12px;line-height:11px;color:#000">推理标记(无)</div>
<div style="left:950px;top:147.2px;width:98.6px;height:1px;background:#d2d2d2"></div>
<div class="b " style="left:950.4px;top:152.2px;width:47.4px;height:12.2px;line-height:11.2px;color:#000">快速导出</div>
<div class="rd" style="left:949.6px;top:171px;width:7.2px;height:7.2px;border-color:#707070"><i style="position:absolute;left:1.5px;top:1.5px;width:3.2px;height:3.2px;border-radius:50%;background:#222"></i></div>
<div class="t" style="left:958.4px;top:169.68px;height:9.84px;line-height:9.84px;font-size:6.56px;color:#000;">不分组</div>
<div class="rd" style="left:985.4px;top:171px;width:7.2px;height:7.2px;border-color:#707070"></div>
<div class="t" style="left:994.2px;top:169.68px;height:9.84px;line-height:9.84px;font-size:6.56px;color:#000;">分组</div>
<div class="sp" style="left:1015.4px;top:168.6px;width:32px;height:12.8px"><span style="position:absolute;left:2.6px;top:0px;line-height:10.4px;color:#1a1a4a;font-size:6.56px">10</span><div class="spb" style="height:10.8px"><svg viewBox="0 0 8 12" width="8" height="10.8" preserveAspectRatio="none"><path d="M2 4.8 L4 2.5 L6 4.8 Z M2 8 L4 10.3 L6 8 Z" fill="#333"/></svg></div></div>
<div class="b " style="left:950.4px;top:184.6px;width:47.4px;height:12.4px;line-height:11.4px;color:#000">导出掩膜图</div>
<div class="b " style="left:1001.2px;top:184.6px;width:47.4px;height:12.4px;line-height:11.4px;color:#000">分类小图浏览</div>
<div class="rd" style="left:949.8px;top:509.4px;width:7.2px;height:7.2px;border-color:#707070"></div>
<div class="t" style="left:958.8px;top:509.18px;height:9.84px;line-height:9.84px;font-size:6.56px;color:#000;">不显示</div>
<div class="rd" style="left:990.2px;top:509.4px;width:7.2px;height:7.2px;border-color:#707070"></div>
<div class="t" style="left:999.2px;top:509.18px;height:9.84px;line-height:9.84px;font-size:6.56px;color:#000;">显示标记</div>
<div class="rd" style="left:949.8px;top:522.8px;width:7.2px;height:7.2px;border-color:#707070"><i style="position:absolute;left:1.5px;top:1.5px;width:3.2px;height:3.2px;border-radius:50%;background:#222"></i></div>
<div class="t" style="left:958.8px;top:522.58px;height:9.84px;line-height:9.84px;font-size:6.56px;color:#000;">显示推理</div>
<div class="rd" style="left:990.2px;top:522.8px;width:7.2px;height:7.2px;border-color:#707070"></div>
<div class="t" style="left:999.2px;top:522.58px;height:9.84px;line-height:9.84px;font-size:6.56px;color:#000;">同时显示</div>
<div class="ck" style="left:1031.2px;top:515.7px;width:7px;height:7px;border-color:#bdbdbd;background:#ececec"><svg viewBox="0 0 7 7" width="7" height="7" style="position:absolute;left:-1px;top:-1px"><path d="M1.4 3.6 L2.9 5.1 L5.7 1.7" fill="none" stroke="#b8b8b8" stroke-width="0.9"/></svg></div>
<div class="t" style="left:1040px;top:507.58px;height:9.84px;line-height:9.84px;font-size:6.56px;color:#a6a6a6;">目</div>
<div class="t" style="left:1040px;top:515.08px;height:9.84px;line-height:9.84px;font-size:6.56px;color:#a6a6a6;">标</div>
<div class="t" style="left:1040px;top:522.58px;height:9.84px;line-height:9.84px;font-size:6.56px;color:#a6a6a6;">框</div>
<div class="t" style="left:951.4px;top:538.08px;height:9.84px;line-height:9.84px;font-size:6.56px;color:#a6a6a6;">尺度</div>
<div class="cb" style="left:965.8px;top:537px;width:31.6px;height:12.2px;background:#ececec;border-color:#d0d0d0"><span style="position:absolute;left:3px;top:0;line-height:10px;color:#a0a0a0">1:1</span><svg viewBox="0 0 8 8" width="6" height="6" style="position:absolute;right:2.2px;top:2.1px"><path d="M1.2 2.8 L4 5.6 L6.8 2.8" fill="none" stroke="#b5b5b5" stroke-width="1"/></svg></div>
<div class="b hot" style="left:1001.2px;top:537px;width:22.2px;height:12.2px;line-height:11.2px;color:#000">合适</div>
<div class="b " style="left:1026.2px;top:537px;width:22.2px;height:12.2px;line-height:11.2px;color:#000">1:1</div>
<div class="b " style="left:950.4px;top:554.6px;width:47.2px;height:11.8px;line-height:10.8px;color:#000">上一页(<span style="font-size:8.6px;line-height:1px">←</span>)</div>
<div class="b " style="left:1001.4px;top:554.6px;width:47px;height:11.8px;line-height:10.8px;color:#000">下一页(空格)</div>
<div style="left:621.8px;top:200.6px;width:429.6px;height:280.8px;background:#f0f0f0;border:1px solid #d6d6d6;box-shadow:0 1px 5px rgba(0,0,0,.4)"></div>
<div style="left:622.4px;top:201px;width:427.6px;height:14px;background:#fff"></div>
<svg style="left:625.2px;top:204px" width="7" height="8" viewBox="0 0 7 8"><rect x=".2" y="2.6" width="3" height="2.6" fill="#cdd8e6"/><circle cx="5.2" cy="1.2" r=".9" fill="#e98a2c"/><path d="M2.2 2.4 L4.4 2 L5 3.8 L6.6 4.2 M4.4 2.2 L3.6 4.6 L4.8 5.6 L4 7.6 M3.6 4.6 L1.8 5.6" stroke="#eea03a" stroke-width=".9" fill="none" stroke-linecap="round"/><path d="M4.2 2.6 L3.8 4.4" stroke="#d2443a" stroke-width="1.2" stroke-linecap="round"/></svg>
<div class="t" style="left:635.6px;top:203.08px;height:9.84px;line-height:9.84px;font-size:6.56px;color:#111;">深度学习训练模型</div>
<div class="t" style="left:630px;top:222.88px;height:9.84px;line-height:9.84px;font-size:6.56px;color:#000;">训练目录</div>
<div class="fd" style="left:663px;top:221.2px;width:299.6px;height:13.2px;line-height:10.6px;text-align:left;color:#444;background:#f0f0f0;padding:0 2.4px;font-size:6.7px;border-color:#bcbcbc">D:\VisionBankSVS_x64\EasyLabelData\Style\ObjectDetect\计数\</div>
<div class="b " style="left:966.4px;top:221.4px;width:47.2px;height:12.2px;line-height:11.2px;color:#000">备份模型</div>
<div class="b " style="left:1017.4px;top:221.4px;width:46.6px;height:12.2px;line-height:11.2px;color:#000">打开路径</div>
<div style="left:630px;top:240px;width:234.6px;height:1px;background:#c6c6c6"></div>
<div class="ck" style="left:630px;top:250.1px;width:7px;height:7px;border-color:#707070;background:#fff"><svg viewBox="0 0 7 7" width="7" height="7" style="position:absolute;left:-1px;top:-1px"><path d="M1.4 3.6 L2.9 5.1 L5.7 1.7" fill="none" stroke="#222" stroke-width="0.9"/></svg></div>
<div class="t" style="left:638.8px;top:248.68px;height:9.84px;line-height:9.84px;font-size:6.56px;color:#000;">水平翻转</div>
<div class="ck" style="left:672px;top:250.1px;width:7px;height:7px;border-color:#707070;background:#fff"></div>
<div class="t" style="left:680.8px;top:248.68px;height:9.84px;line-height:9.84px;font-size:6.56px;color:#000;">垂直翻转</div>
<div class="ck" style="left:714px;top:250.1px;width:7px;height:7px;border-color:#707070;background:#fff"><svg viewBox="0 0 7 7" width="7" height="7" style="position:absolute;left:-1px;top:-1px"><path d="M1.4 3.6 L2.9 5.1 L5.7 1.7" fill="none" stroke="#222" stroke-width="0.9"/></svg></div>
<div class="t" style="left:722.8px;top:248.68px;height:9.84px;line-height:9.84px;font-size:6.56px;color:#000;">随机旋转</div>
<div class="t" style="left:758.6px;top:248.68px;height:9.84px;line-height:9.84px;font-size:6.56px;color:#000;">最大随机旋转角度</div>
<div class="sp" style="left:826.3px;top:246.3px;width:38px;height:14.2px"><span style="position:absolute;left:1.8px;top:0.4px;line-height:11.8px;color:#1a1a4a;font-size:7.1px">15.0</span><div class="spb" style="height:12.2px"><svg viewBox="0 0 8 12" width="8" height="12.2" preserveAspectRatio="none"><path d="M2 4.8 L4 2.5 L6 4.8 Z M2 8 L4 10.3 L6 8 Z" fill="#333"/></svg></div></div>
<div class="ck" style="left:630px;top:267.1px;width:7px;height:7px;border-color:#707070;background:#fff"></div>
<div class="t" style="left:638.8px;top:265.68px;height:9.84px;line-height:9.84px;font-size:6.56px;color:#000;">模糊处理</div>
<div class="ck" style="left:672px;top:267.1px;width:7px;height:7px;border-color:#707070;background:#fff"></div>
<div class="t" style="left:680.8px;top:265.68px;height:9.84px;line-height:9.84px;font-size:6.56px;color:#000;">HSV</div>
<div class="ck" style="left:714px;top:267.1px;width:7px;height:7px;border-color:#707070;background:#fff"><svg viewBox="0 0 7 7" width="7" height="7" style="position:absolute;left:-1px;top:-1px"><path d="M1.4 3.6 L2.9 5.1 L5.7 1.7" fill="none" stroke="#222" stroke-width="0.9"/></svg></div>
<div class="t" style="left:722.8px;top:265.68px;height:9.84px;line-height:9.84px;font-size:6.56px;color:#000;">缩放裁切</div>
<div class="t" style="left:758.6px;top:265.68px;height:9.84px;line-height:9.84px;font-size:6.56px;color:#000;">比例</div>
<div class="sp" style="left:777.3px;top:263.3px;width:38.1px;height:14.2px"><span style="position:absolute;left:1.8px;top:0.4px;line-height:11.8px;color:#1a1a4a;font-size:7.1px">0.75</span><div class="spb" style="height:12.2px"><svg viewBox="0 0 8 12" width="8" height="12.2" preserveAspectRatio="none"><path d="M2 4.8 L4 2.5 L6 4.8 Z M2 8 L4 10.3 L6 8 Z" fill="#333"/></svg></div></div>
<div class="t" style="left:818px;top:264.85px;height:13.5px;line-height:13.5px;font-size:9px;color:#555;">~</div>
<div class="sp" style="left:826.3px;top:263.3px;width:38px;height:14.2px"><span style="position:absolute;left:1.8px;top:0.4px;line-height:11.8px;color:#1a1a4a;font-size:7.1px">1.25</span><div class="spb" style="height:12.2px"><svg viewBox="0 0 8 12" width="8" height="12.2" preserveAspectRatio="none"><path d="M2 4.8 L4 2.5 L6 4.8 Z M2 8 L4 10.3 L6 8 Z" fill="#333"/></svg></div></div>
<div class="t" style="left:630px;top:283.08px;height:9.84px;line-height:9.84px;font-size:6.56px;color:#a6a6a6;">模型类型</div>
<div class="rd" style="left:665.4px;top:284px;width:7.2px;height:7.2px;border-color:#c4c4c4"><i style="position:absolute;left:1.5px;top:1.5px;width:3.2px;height:3.2px;border-radius:50%;background:#b0b0b0"></i></div>
<div class="t" style="left:674.4px;top:282.68px;height:9.84px;line-height:9.84px;font-size:6.56px;color:#a6a6a6;">小</div>
<div class="rd" style="left:693.8px;top:284px;width:7.2px;height:7.2px;border-color:#c4c4c4"></div>
<div class="t" style="left:702.8px;top:282.68px;height:9.84px;line-height:9.84px;font-size:6.56px;color:#a6a6a6;">中</div>
<div class="rd" style="left:722.6px;top:284px;width:7.2px;height:7.2px;border-color:#c4c4c4"></div>
<div class="t" style="left:731.6px;top:282.68px;height:9.84px;line-height:9.84px;font-size:6.56px;color:#a6a6a6;">大</div>
<div class="rd" style="left:751px;top:284px;width:7.2px;height:7.2px;border-color:#c4c4c4"></div>
<div class="t" style="left:760px;top:282.68px;height:9.84px;line-height:9.84px;font-size:6.56px;color:#a6a6a6;">特大</div>
<div class="t" style="left:630px;top:300.98px;height:9.84px;line-height:9.84px;font-size:6.56px;color:#000;">预缩放比例</div>
<div class="sp" style="left:665.3px;top:298.3px;width:38.4px;height:13.4px"><span style="position:absolute;left:1.8px;top:0.4px;line-height:11px;color:#1a1a4a;font-size:7.1px">0.45</span><div class="spb" style="height:11.4px"><svg viewBox="0 0 8 12" width="8" height="11.4" preserveAspectRatio="none"><path d="M2 4.8 L4 2.5 L6 4.8 Z M2 8 L4 10.3 L6 8 Z" fill="#333"/></svg></div></div>
<div class="t" style="left:710.2px;top:300.98px;height:9.84px;line-height:9.84px;font-size:6.56px;color:#000;">最大推理宽</div>
<div class="sp" style="left:746.4px;top:298.3px;width:37.5px;height:13.4px"><span style="position:absolute;left:1.8px;top:0.4px;line-height:11px;color:#1a1a4a;font-size:7.1px">1600</span><div class="spb" style="height:11.4px"><svg viewBox="0 0 8 12" width="8" height="11.4" preserveAspectRatio="none"><path d="M2 4.8 L4 2.5 L6 4.8 Z M2 8 L4 10.3 L6 8 Z" fill="#333"/></svg></div></div>
<div class="t" style="left:790.6px;top:300.98px;height:9.84px;line-height:9.84px;font-size:6.56px;color:#000;">最大推理高</div>
<div class="sp" style="left:826.3px;top:298.3px;width:38px;height:13.4px"><span style="position:absolute;left:1.8px;top:0.4px;line-height:11px;color:#1a1a4a;font-size:7.1px">1200</span><div class="spb" style="height:11.4px"><svg viewBox="0 0 8 12" width="8" height="11.4" preserveAspectRatio="none"><path d="M2 4.8 L4 2.5 L6 4.8 Z M2 8 L4 10.3 L6 8 Z" fill="#333"/></svg></div></div>
<div class="t" style="left:630px;top:318.38px;height:9.84px;line-height:9.84px;font-size:6.56px;color:#a6a6a6;">通道数</div>
<div class="cb" style="left:665.3px;top:315.7px;width:38.4px;height:13.4px;background:#ececec;border-color:#d0d0d0"><span style="position:absolute;left:3px;top:0;line-height:11.2px;color:#a0a0a0">3</span><svg viewBox="0 0 8 8" width="6" height="6" style="position:absolute;right:2.2px;top:2.7px"><path d="M1.2 2.8 L4 5.6 L6.8 2.8" fill="none" stroke="#b5b5b5" stroke-width="1"/></svg></div>
<div class="t" style="left:710.2px;top:318.38px;height:9.84px;line-height:9.84px;font-size:6.56px;color:#000;">图像宽度</div>
<div class="sp" style="left:746.4px;top:315.7px;width:37.5px;height:13.4px"><span style="position:absolute;left:1.8px;top:0.4px;line-height:11px;color:#1a1a4a;font-size:7.1px">1600</span><div class="spb" style="height:11.4px"><svg viewBox="0 0 8 12" width="8" height="11.4" preserveAspectRatio="none"><path d="M2 4.8 L4 2.5 L6 4.8 Z M2 8 L4 10.3 L6 8 Z" fill="#333"/></svg></div></div>
<div class="t" style="left:790.6px;top:318.38px;height:9.84px;line-height:9.84px;font-size:6.56px;color:#000;">图像高度</div>
<div class="sp" style="left:826.3px;top:315.7px;width:38px;height:13.4px"><span style="position:absolute;left:1.8px;top:0.4px;line-height:11px;color:#1a1a4a;font-size:7.1px">1200</span><div class="spb" style="height:11.4px"><svg viewBox="0 0 8 12" width="8" height="11.4" preserveAspectRatio="none"><path d="M2 4.8 L4 2.5 L6 4.8 Z M2 8 L4 10.3 L6 8 Z" fill="#333"/></svg></div></div>
<div class="t" style="left:630px;top:335.58px;height:9.84px;line-height:9.84px;font-size:6.56px;color:#000;">损失类型</div>
<div class="cb" style="left:665.3px;top:332.9px;width:38.4px;height:13.4px;background:#fff;border-color:#9a9a9a"><span style="position:absolute;left:3px;top:0;line-height:11.2px;color:#000">1</span><svg viewBox="0 0 8 8" width="6" height="6" style="position:absolute;right:2.2px;top:2.7px"><path d="M1.2 2.8 L4 5.6 L6.8 2.8" fill="none" stroke="#555" stroke-width="1"/></svg></div>
<div class="t" style="left:710.2px;top:335.58px;height:9.84px;line-height:9.84px;font-size:6.56px;color:#000;">标记偏差</div>
<div class="sp" style="left:746.4px;top:332.9px;width:37.5px;height:13.4px"><span style="position:absolute;left:1.8px;top:0.4px;line-height:11px;color:#1a1a4a;font-size:7.1px">0.00</span><div class="spb" style="height:11.4px"><svg viewBox="0 0 8 12" width="8" height="11.4" preserveAspectRatio="none"><path d="M2 4.8 L4 2.5 L6 4.8 Z M2 8 L4 10.3 L6 8 Z" fill="#333"/></svg></div></div>
<div class="t" style="left:790.6px;top:335.58px;height:9.84px;line-height:9.84px;font-size:6.56px;color:#000;">初始学习率</div>
<div class="sp" style="left:826.3px;top:332.9px;width:38px;height:13.4px"><span style="position:absolute;left:1.8px;top:0.4px;line-height:11px;color:#1a1a4a;font-size:7.1px">0.01</span><div class="spb" style="height:11.4px"><svg viewBox="0 0 8 12" width="8" height="11.4" preserveAspectRatio="none"><path d="M2 4.8 L4 2.5 L6 4.8 Z M2 8 L4 10.3 L6 8 Z" fill="#333"/></svg></div></div>
<div class="t" style="left:630px;top:352.78px;height:9.84px;line-height:9.84px;font-size:6.56px;color:#000;">训练次数</div>
<div class="sp" style="left:665.3px;top:350.1px;width:38.4px;height:13.4px"><span style="position:absolute;left:1.8px;top:0.4px;line-height:11px;color:#1a1a4a;font-size:7.1px">10000</span><div class="spb" style="height:11.4px"><svg viewBox="0 0 8 12" width="8" height="11.4" preserveAspectRatio="none"><path d="M2 4.8 L4 2.5 L6 4.8 Z M2 8 L4 10.3 L6 8 Z" fill="#333"/></svg></div></div>
<div class="t" style="left:710.2px;top:352.78px;height:9.84px;line-height:9.84px;font-size:6.56px;color:#000;">保存间隔</div>
<div class="sp" style="left:746.4px;top:350.1px;width:37.5px;height:13.4px"><span style="position:absolute;left:1.8px;top:0.4px;line-height:11px;color:#1a1a4a;font-size:7.1px">10</span><div class="spb" style="height:11.4px"><svg viewBox="0 0 8 12" width="8" height="11.4" preserveAspectRatio="none"><path d="M2 4.8 L4 2.5 L6 4.8 Z M2 8 L4 10.3 L6 8 Z" fill="#333"/></svg></div></div>
<div class="t" style="left:790.6px;top:352.78px;height:9.84px;line-height:9.84px;font-size:6.56px;color:#000;">批处理数</div>
<div class="sp" style="left:826.3px;top:350.1px;width:38px;height:13.4px"><span style="position:absolute;left:1.8px;top:0.4px;line-height:11px;color:#1a1a4a;font-size:7.1px">2</span><div class="spb" style="height:11.4px"><svg viewBox="0 0 8 12" width="8" height="11.4" preserveAspectRatio="none"><path d="M2 4.8 L4 2.5 L6 4.8 Z M2 8 L4 10.3 L6 8 Z" fill="#333"/></svg></div></div>
<div class="ck" style="left:630.4px;top:370.7px;width:7px;height:7px;border-color:#707070;background:#fff"></div>
<div class="t" style="left:639.2px;top:369.28px;height:9.84px;line-height:9.84px;font-size:6.56px;color:#000;">保存中间过程模型</div>
<div class="ck" style="left:710.2px;top:370.7px;width:7px;height:7px;border-color:#707070;background:#fff"></div>
<div class="t" style="left:719px;top:369.28px;height:9.84px;line-height:9.84px;font-size:6.56px;color:#000;">启用内存中训练</div>
<div class="ck" style="left:790.6px;top:370.7px;width:7px;height:7px;border-color:#bdbdbd;background:#ececec"><svg viewBox="0 0 7 7" width="7" height="7" style="position:absolute;left:-1px;top:-1px"><path d="M1.4 3.6 L2.9 5.1 L5.7 1.7" fill="none" stroke="#b8b8b8" stroke-width="0.9"/></svg></div>
<div class="t" style="left:799.4px;top:369.28px;height:9.84px;line-height:9.84px;font-size:6.56px;color:#a6a6a6;">模型可输出概率图</div>
<div style="left:630px;top:387.4px;width:233px;height:1px;background:#c6c6c6"></div>
<div class="t" style="left:630px;top:398.78px;height:9.84px;line-height:9.84px;font-size:6.56px;color:#000;">当前次数</div>
<div class="fd" style="left:665.4px;top:396.6px;width:38px;height:12.8px;line-height:12.2px;text-align:center;color:#2a2a2a;background:#f0f0f0;padding:0 3px;font-size:7px;">920</div>
<div class="t" style="left:711.4px;top:398.78px;height:9.84px;line-height:9.84px;font-size:6.56px;color:#000;">训练用时</div>
<div class="fd" style="left:747.2px;top:396.6px;width:37.6px;height:12.8px;line-height:12.2px;text-align:center;color:#2a2a2a;background:#f0f0f0;padding:0 3px;font-size:7px;">00:21:38</div>
<div class="t" style="left:630px;top:416.28px;height:9.84px;line-height:9.84px;font-size:6.56px;color:#000;">训练设备</div>
<div class="fd" style="left:665.4px;top:413.4px;width:198.8px;height:13px;line-height:12.4px;text-align:left;color:#2a2a2a;background:#f0f0f0;padding:0 4.6px;font-size:6.8px;letter-spacing:-.2px">GPU : GeForce GTX 1660 SUPER</div>
<div style="left:629.8px;top:434px;width:235px;height:4.6px;background:#e6e6e6;border:1px solid #bcbcbc"></div>
<div style="left:630.4px;top:434.6px;width:20.6px;height:3.4px;background:linear-gradient(#7be37b,#2fc42f)"></div>
<div class="t" style="left:630px;top:448.98px;height:9.84px;line-height:9.84px;font-size:6.56px;color:#000;">状态描述</div>
<div class="fd" style="left:665.4px;top:446.2px;width:198.8px;height:12.4px;line-height:10.4px;text-align:left;color:#333;background:#f0f0f0;padding:0 3px;font-size:6.56px;"></div>
<div class="ck" style="left:670.6px;top:466.7px;width:7px;height:7px;border-color:#707070;background:#fff"><svg viewBox="0 0 7 7" width="7" height="7" style="position:absolute;left:-1px;top:-1px"><path d="M1.4 3.6 L2.9 5.1 L5.7 1.7" fill="none" stroke="#222" stroke-width="0.9"/></svg></div>
<div class="t" style="left:679.4px;top:465.28px;height:9.84px;line-height:9.84px;font-size:6.56px;color:#000;">继续之前的训练</div>
<div class="b " style="left:735.6px;top:463.6px;width:46.2px;height:11.8px;line-height:10.8px;color:#000">开始训练</div>
<div class="b foc" style="left:786px;top:463.6px;width:47px;height:11.8px;line-height:10.8px;color:#000">返回</div>
<div style="left:871.4px;top:240.6px;width:200px;height:198.2px;background:#ebebeb;border:1px solid #d4d4d4"></div>
<svg style="left:0;top:0" width="1050" height="571" viewBox="0 0 1050 571">
<circle cx="881.2" cy="250.6" r="1.4" fill="#0000ff"/>
<text x="887.4" y="253.2" font-size="7.4" fill="#222">准确率</text>
<circle cx="919.4" cy="250.6" r="1.4" fill="#ff0000"/>
<text x="925.4" y="253.2" font-size="7.4" fill="#222">损失值</text>
<circle cx="958" cy="250.6" r="1.4" fill="#ff00ff"/>
<text x="963.2" y="253.2" font-size="7.4" fill="#222">mAP值</text>
<circle cx="996.2" cy="250.6" r="1.4" fill="#008000"/>
<text x="1001.6" y="253.2" font-size="7.4" fill="#222">mIOU值</text>
<path d="M891.3 259 V427.2 H1050" fill="none" stroke="#333" stroke-width=".9"/>
<path d="M889.6 261.6 L891.3 257.6 L893 261.6 Z" fill="#111"/>
<path d="M892 346.6 H1050" stroke="#bdbdbd" stroke-width=".9" stroke-dasharray="1.2 1.6"/>
<text x="887.4" y="268.7" font-size="6.7" fill="#1c1c30" text-anchor="end">1.0</text>
<text x="887.4" y="349.1" font-size="6.7" fill="#1c1c30" text-anchor="end">0.5</text>
<text x="887.4" y="429.7" font-size="6.7" fill="#1c1c30" text-anchor="end">0.0</text>
<path d="M891.4 266.2 L893.7 266.2 L896.1 266.2 L898.4 266.2 L900.7 266.2 L903.0 266.2 L905.4 266.2 L907.7 266.2 L910.0 266.2 L912.3 266.2 L914.7 266.2 L917.0 287.9 L919.3 266.2 L921.6 318.5 L924.0 266.2 L926.3 266.2 L928.6 332.2 L930.9 266.2 L933.3 310.5 L935.6 333.0 L937.9 266.2 L940.2 266.2 L942.6 345.1 L944.9 321.7 L947.2 287.9 L949.5 300.0 L951.9 293.6 L954.2 304.8 L956.5 360.7 L958.9 362.8 L961.2 362.8 L963.5 362.8 L965.8 362.8 L968.2 280.7 L970.5 333.0 L972.8 361.2 L975.1 361.2 L977.5 266.2 L979.8 322.5 L982.1 341.9 L984.4 302.4 L986.8 266.2 L989.1 288.7 L991.4 266.2 L993.7 266.2 L996.1 266.2 L998.4 266.2 L1000.7 340.3 L1003.0 312.9 L1005.4 283.9 L1007.7 319.3 L1010.0 266.2 L1012.4 299.2 L1014.7 314.5 L1017.0 266.2 L1019.3 266.2 L1021.7 312.1 L1024.0 279.1 L1026.3 322.5 L1028.6 318.5 L1031.0 296.0 L1033.3 302.4 L1035.6 266.2 L1037.9 283.1 L1040.3 333.8 L1042.6 358.0 L1044.9 305.6 L1047.2 296.8 L1049.6 266.2 L1051.9 327.4 L1054.2 266.2 L1056.5 314.5" fill="none" stroke="#ff0000" stroke-width="0.5" stroke-linejoin="round" opacity=".85"/>
<g fill="#ff0000"><circle cx="891.4" cy="266.2" r="1.25"/><circle cx="893.7" cy="266.2" r="1.25"/><circle cx="896.1" cy="266.2" r="1.25"/><circle cx="898.4" cy="266.2" r="1.25"/><circle cx="900.7" cy="266.2" r="1.25"/><circle cx="903.0" cy="266.2" r="1.25"/><circle cx="905.4" cy="266.2" r="1.25"/><circle cx="907.7" cy="266.2" r="1.25"/><circle cx="910.0" cy="266.2" r="1.25"/><circle cx="912.3" cy="266.2" r="1.25"/><circle cx="914.7" cy="266.2" r="1.25"/><circle cx="917.0" cy="287.9" r="1.25"/><circle cx="919.3" cy="266.2" r="1.25"/><circle cx="921.6" cy="318.5" r="1.25"/><circle cx="924.0" cy="266.2" r="1.25"/><circle cx="926.3" cy="266.2" r="1.25"/><circle cx="928.6" cy="332.2" r="1.25"/><circle cx="930.9" cy="266.2" r="1.25"/><circle cx="933.3" cy="310.5" r="1.25"/><circle cx="935.6" cy="333.0" r="1.25"/><circle cx="937.9" cy="266.2" r="1.25"/><circle cx="940.2" cy="266.2" r="1.25"/><circle cx="942.6" cy="345.1" r="1.25"/><circle cx="944.9" cy="321.7" r="1.25"/><circle cx="947.2" cy="287.9" r="1.25"/><circle cx="949.5" cy="300.0" r="1.25"/><circle cx="951.9" cy="293.6" r="1.25"/><circle cx="954.2" cy="304.8" r="1.25"/><circle cx="956.5" cy="360.7" r="1.25"/><circle cx="958.9" cy="362.8" r="1.25"/><circle cx="961.2" cy="362.8" r="1.25"/><circle cx="963.5" cy="362.8" r="1.25"/><circle cx="965.8" cy="362.8" r="1.25"/><circle cx="968.2" cy="280.7" r="1.25"/><circle cx="970.5" cy="333.0" r="1.25"/><circle cx="972.8" cy="361.2" r="1.25"/><circle cx="975.1" cy="361.2" r="1.25"/><circle cx="977.5" cy="266.2" r="1.25"/><circle cx="979.8" cy="322.5" r="1.25"/><circle cx="982.1" cy="341.9" r="1.25"/><circle cx="984.4" cy="302.4" r="1.25"/><circle cx="986.8" cy="266.2" r="1.25"/><circle cx="989.1" cy="288.7" r="1.25"/><circle cx="991.4" cy="266.2" r="1.25"/><circle cx="993.7" cy="266.2" r="1.25"/><circle cx="996.1" cy="266.2" r="1.25"/><circle cx="998.4" cy="266.2" r="1.25"/><circle cx="1000.7" cy="340.3" r="1.25"/><circle cx="1003.0" cy="312.9" r="1.25"/><circle cx="1005.4" cy="283.9" r="1.25"/><circle cx="1007.7" cy="319.3" r="1.25"/><circle cx="1010.0" cy="266.2" r="1.25"/><circle cx="1012.4" cy="299.2" r="1.25"/><circle cx="1014.7" cy="314.5" r="1.25"/><circle cx="1017.0" cy="266.2" r="1.25"/><circle cx="1019.3" cy="266.2" r="1.25"/><circle cx="1021.7" cy="312.1" r="1.25"/><circle cx="1024.0" cy="279.1" r="1.25"/><circle cx="1026.3" cy="322.5" r="1.25"/><circle cx="1028.6" cy="318.5" r="1.25"/><circle cx="1031.0" cy="296.0" r="1.25"/><circle cx="1033.3" cy="302.4" r="1.25"/><circle cx="1035.6" cy="266.2" r="1.25"/><circle cx="1037.9" cy="283.1" r="1.25"/><circle cx="1040.3" cy="333.8" r="1.25"/><circle cx="1042.6" cy="358.0" r="1.25"/><circle cx="1044.9" cy="305.6" r="1.25"/><circle cx="1047.2" cy="296.8" r="1.25"/><circle cx="1049.6" cy="266.2" r="1.25"/><circle cx="1051.9" cy="327.4" r="1.25"/><circle cx="1054.2" cy="266.2" r="1.25"/><circle cx="1056.5" cy="314.5" r="1.25"/></g>
<path d="M891.4 398.2 L893.7 375.2 L896.1 302.1 L898.4 298.4 L900.7 283.3 L903.0 287.9 L905.4 296.8 L907.7 283.9 L910.0 306.4 L912.3 284.4 L914.7 294.5 L917.0 279.6 L919.3 280.4 L921.6 278.4 L924.0 279.6 L926.3 278.1 L928.6 275.9 L930.9 278.1 L933.3 277.3 L935.6 275.9 L937.9 277.3 L940.2 275.9 L942.6 274.9 L944.9 275.9 L947.2 273.8 L949.5 273.3 L951.9 272.6 L954.2 272.2 L956.5 272.2 L958.9 272.2 L961.2 273.8 L963.5 272.6 L965.8 273.3 L968.2 273.0 L970.5 273.0 L972.8 272.2 L975.1 273.0 L977.5 274.9 L979.8 276.5 L982.1 274.2 L984.4 276.5 L986.8 282.8 L989.1 280.4 L991.4 280.4 L993.7 384.4 L996.1 294.5 L998.4 281.2 L1000.7 279.6 L1003.0 282.8 L1005.4 283.6 L1007.7 277.5 L1010.0 287.1 L1012.4 277.5 L1014.7 274.9 L1017.0 303.2 L1019.3 279.6 L1021.7 276.5 L1024.0 276.5 L1026.3 275.9 L1028.6 274.9 L1031.0 277.5 L1033.3 284.4 L1035.6 279.1 L1037.9 282.8 L1040.3 277.5 L1042.6 274.9 L1044.9 271.8 L1047.2 274.9 L1049.6 279.1 L1051.9 282.3 L1054.2 277.5 L1056.5 275.9" fill="none" stroke="#008000" stroke-width="0.55" stroke-linejoin="round" opacity=".85"/>
<g fill="#008000"><circle cx="891.4" cy="398.2" r="1.25"/><circle cx="893.7" cy="375.2" r="1.25"/><circle cx="896.1" cy="302.1" r="1.25"/><circle cx="898.4" cy="298.4" r="1.25"/><circle cx="900.7" cy="283.3" r="1.25"/><circle cx="903.0" cy="287.9" r="1.25"/><circle cx="905.4" cy="296.8" r="1.25"/><circle cx="907.7" cy="283.9" r="1.25"/><circle cx="910.0" cy="306.4" r="1.25"/><circle cx="912.3" cy="284.4" r="1.25"/><circle cx="914.7" cy="294.5" r="1.25"/><circle cx="917.0" cy="279.6" r="1.25"/><circle cx="919.3" cy="280.4" r="1.25"/><circle cx="921.6" cy="278.4" r="1.25"/><circle cx="924.0" cy="279.6" r="1.25"/><circle cx="926.3" cy="278.1" r="1.25"/><circle cx="928.6" cy="275.9" r="1.25"/><circle cx="930.9" cy="278.1" r="1.25"/><circle cx="933.3" cy="277.3" r="1.25"/><circle cx="935.6" cy="275.9" r="1.25"/><circle cx="937.9" cy="277.3" r="1.25"/><circle cx="940.2" cy="275.9" r="1.25"/><circle cx="942.6" cy="274.9" r="1.25"/><circle cx="944.9" cy="275.9" r="1.25"/><circle cx="947.2" cy="273.8" r="1.25"/><circle cx="949.5" cy="273.3" r="1.25"/><circle cx="951.9" cy="272.6" r="1.25"/><circle cx="954.2" cy="272.2" r="1.25"/><circle cx="956.5" cy="272.2" r="1.25"/><circle cx="958.9" cy="272.2" r="1.25"/><circle cx="961.2" cy="273.8" r="1.25"/><circle cx="963.5" cy="272.6" r="1.25"/><circle cx="965.8" cy="273.3" r="1.25"/><circle cx="968.2" cy="273.0" r="1.25"/><circle cx="970.5" cy="273.0" r="1.25"/><circle cx="972.8" cy="272.2" r="1.25"/><circle cx="975.1" cy="273.0" r="1.25"/><circle cx="977.5" cy="274.9" r="1.25"/><circle cx="979.8" cy="276.5" r="1.25"/><circle cx="982.1" cy="274.2" r="1.25"/><circle cx="984.4" cy="276.5" r="1.25"/><circle cx="986.8" cy="282.8" r="1.25"/><circle cx="989.1" cy="280.4" r="1.25"/><circle cx="991.4" cy="280.4" r="1.25"/><circle cx="993.7" cy="384.4" r="1.25"/><circle cx="996.1" cy="294.5" r="1.25"/><circle cx="998.4" cy="281.2" r="1.25"/><circle cx="1000.7" cy="279.6" r="1.25"/><circle cx="1003.0" cy="282.8" r="1.25"/><circle cx="1005.4" cy="283.6" r="1.25"/><circle cx="1007.7" cy="277.5" r="1.25"/><circle cx="1010.0" cy="287.1" r="1.25"/><circle cx="1012.4" cy="277.5" r="1.25"/><circle cx="1014.7" cy="274.9" r="1.25"/><circle cx="1017.0" cy="303.2" r="1.25"/><circle cx="1019.3" cy="279.6" r="1.25"/><circle cx="1021.7" cy="276.5" r="1.25"/><circle cx="1024.0" cy="276.5" r="1.25"/><circle cx="1026.3" cy="275.9" r="1.25"/><circle cx="1028.6" cy="274.9" r="1.25"/><circle cx="1031.0" cy="277.5" r="1.25"/><circle cx="1033.3" cy="284.4" r="1.25"/><circle cx="1035.6" cy="279.1" r="1.25"/><circle cx="1037.9" cy="282.8" r="1.25"/><circle cx="1040.3" cy="277.5" r="1.25"/><circle cx="1042.6" cy="274.9" r="1.25"/><circle cx="1044.9" cy="271.8" r="1.25"/><circle cx="1047.2" cy="274.9" r="1.25"/><circle cx="1049.6" cy="279.1" r="1.25"/><circle cx="1051.9" cy="282.3" r="1.25"/><circle cx="1054.2" cy="277.5" r="1.25"/><circle cx="1056.5" cy="275.9" r="1.25"/></g>
<path d="M891.4 360.7 L893.7 350.9 L896.1 319.7 L898.4 319.7 L900.7 296.8 L903.0 306.4 L905.4 313.5 L907.7 298.4 L910.0 311.3 L912.3 300.0 L914.7 321.9 L917.0 289.5 L919.3 289.5 L921.6 285.5 L924.0 287.5 L926.3 284.7 L928.6 282.3 L930.9 288.3 L933.3 284.4 L935.6 279.6 L937.9 289.9 L940.2 280.4 L942.6 278.1 L944.9 278.1 L947.2 274.2 L949.5 275.4 L951.9 274.9 L954.2 271.7 L956.5 271.7 L958.9 271.7 L961.2 273.3 L963.5 271.7 L965.8 273.3 L968.2 274.9 L970.5 275.9 L972.8 271.7 L975.1 272.6 L977.5 284.4 L979.8 275.9 L982.1 273.3 L984.4 276.5 L986.8 285.5 L989.1 288.7 L991.4 292.0 L993.7 309.7 L996.1 300.0 L998.4 286.0 L1000.7 273.3 L1003.0 295.2 L1005.4 292.0 L1007.7 283.9 L1010.0 296.1 L1012.4 284.4 L1014.7 277.5 L1017.0 301.0 L1019.3 289.1 L1021.7 282.8 L1024.0 282.0 L1026.3 281.2 L1028.6 276.5 L1031.0 282.0 L1033.3 301.0 L1035.6 301.6 L1037.9 288.3 L1040.3 282.8 L1042.6 276.5 L1044.9 270.2 L1047.2 278.1 L1049.6 287.1 L1051.9 298.4 L1054.2 290.3 L1056.5 282.3" fill="none" stroke="#ff00ff" stroke-width="0.55" stroke-linejoin="round" opacity=".85"/>
<g fill="#ff00ff"><circle cx="891.4" cy="360.7" r="1.25"/><circle cx="893.7" cy="350.9" r="1.25"/><circle cx="896.1" cy="319.7" r="1.25"/><circle cx="898.4" cy="319.7" r="1.25"/><circle cx="900.7" cy="296.8" r="1.25"/><circle cx="903.0" cy="306.4" r="1.25"/><circle cx="905.4" cy="313.5" r="1.25"/><circle cx="907.7" cy="298.4" r="1.25"/><circle cx="910.0" cy="311.3" r="1.25"/><circle cx="912.3" cy="300.0" r="1.25"/><circle cx="914.7" cy="321.9" r="1.25"/><circle cx="917.0" cy="289.5" r="1.25"/><circle cx="919.3" cy="289.5" r="1.25"/><circle cx="921.6" cy="285.5" r="1.25"/><circle cx="924.0" cy="287.5" r="1.25"/><circle cx="926.3" cy="284.7" r="1.25"/><circle cx="928.6" cy="282.3" r="1.25"/><circle cx="930.9" cy="288.3" r="1.25"/><circle cx="933.3" cy="284.4" r="1.25"/><circle cx="935.6" cy="279.6" r="1.25"/><circle cx="937.9" cy="289.9" r="1.25"/><circle cx="940.2" cy="280.4" r="1.25"/><circle cx="942.6" cy="278.1" r="1.25"/><circle cx="944.9" cy="278.1" r="1.25"/><circle cx="947.2" cy="274.2" r="1.25"/><circle cx="949.5" cy="275.4" r="1.25"/><circle cx="951.9" cy="274.9" r="1.25"/><circle cx="954.2" cy="271.7" r="1.25"/><circle cx="956.5" cy="271.7" r="1.25"/><circle cx="958.9" cy="271.7" r="1.25"/><circle cx="961.2" cy="273.3" r="1.25"/><circle cx="963.5" cy="271.7" r="1.25"/><circle cx="965.8" cy="273.3" r="1.25"/><circle cx="968.2" cy="274.9" r="1.25"/><circle cx="970.5" cy="275.9" r="1.25"/><circle cx="972.8" cy="271.7" r="1.25"/><circle cx="975.1" cy="272.6" r="1.25"/><circle cx="977.5" cy="284.4" r="1.25"/><circle cx="979.8" cy="275.9" r="1.25"/><circle cx="982.1" cy="273.3" r="1.25"/><circle cx="984.4" cy="276.5" r="1.25"/><circle cx="986.8" cy="285.5" r="1.25"/><circle cx="989.1" cy="288.7" r="1.25"/><circle cx="991.4" cy="292.0" r="1.25"/><circle cx="993.7" cy="309.7" r="1.25"/><circle cx="996.1" cy="300.0" r="1.25"/><circle cx="998.4" cy="286.0" r="1.25"/><circle cx="1000.7" cy="273.3" r="1.25"/><circle cx="1003.0" cy="295.2" r="1.25"/><circle cx="1005.4" cy="292.0" r="1.25"/><circle cx="1007.7" cy="283.9" r="1.25"/><circle cx="1010.0" cy="296.1" r="1.25"/><circle cx="1012.4" cy="284.4" r="1.25"/><circle cx="1014.7" cy="277.5" r="1.25"/><circle cx="1017.0" cy="301.0" r="1.25"/><circle cx="1019.3" cy="289.1" r="1.25"/><circle cx="1021.7" cy="282.8" r="1.25"/><circle cx="1024.0" cy="282.0" r="1.25"/><circle cx="1026.3" cy="281.2" r="1.25"/><circle cx="1028.6" cy="276.5" r="1.25"/><circle cx="1031.0" cy="282.0" r="1.25"/><circle cx="1033.3" cy="301.0" r="1.25"/><circle cx="1035.6" cy="301.6" r="1.25"/><circle cx="1037.9" cy="288.3" r="1.25"/><circle cx="1040.3" cy="282.8" r="1.25"/><circle cx="1042.6" cy="276.5" r="1.25"/><circle cx="1044.9" cy="270.2" r="1.25"/><circle cx="1047.2" cy="278.1" r="1.25"/><circle cx="1049.6" cy="287.1" r="1.25"/><circle cx="1051.9" cy="298.4" r="1.25"/><circle cx="1054.2" cy="290.3" r="1.25"/><circle cx="1056.5" cy="282.3" r="1.25"/></g>
<path d="M891.4 392.3 L893.7 366.2 L896.1 273.3 L898.4 273.3 L900.7 266.2 L903.0 266.2 L905.4 273.4 L907.7 266.2 L910.0 285.5 L912.3 266.2 L914.7 266.2 L917.0 266.2 L919.3 266.2 L921.6 266.2 L924.0 266.2 L926.3 266.2 L928.6 266.2 L930.9 266.2 L933.3 266.2 L935.6 266.2 L937.9 266.2 L940.2 266.2 L942.6 266.2 L944.9 266.2 L947.2 266.2 L949.5 266.2 L951.9 266.2 L954.2 266.2 L956.5 266.2 L958.9 266.2 L961.2 266.2 L963.5 266.2 L965.8 266.2 L968.2 266.2 L970.5 266.2 L972.8 266.2 L975.1 266.2 L977.5 266.2 L979.8 266.2 L982.1 266.2 L984.4 266.2 L986.8 270.2 L989.1 266.2 L991.4 266.2 L993.7 379.2 L996.1 275.9 L998.4 266.2 L1000.7 266.2 L1003.0 266.2 L1005.4 270.2 L1007.7 266.2 L1010.0 270.2 L1012.4 266.2 L1014.7 266.2 L1017.0 285.5 L1019.3 266.2 L1021.7 266.2 L1024.0 266.2 L1026.3 266.2 L1028.6 266.2 L1031.0 266.2 L1033.3 266.2 L1035.6 266.2 L1037.9 266.2 L1040.3 266.2 L1042.6 266.2 L1044.9 266.2 L1047.2 266.2 L1049.6 266.2 L1051.9 282.3 L1054.2 298.4 L1056.5 266.2" fill="none" stroke="#0000ff" stroke-width="0.55" stroke-linejoin="round" opacity=".85"/>
<g fill="#0000ff"><circle cx="891.4" cy="392.3" r="1.25"/><circle cx="893.7" cy="366.2" r="1.25"/><circle cx="896.1" cy="273.3" r="1.25"/><circle cx="898.4" cy="273.3" r="1.25"/><circle cx="900.7" cy="266.2" r="1.25"/><circle cx="903.0" cy="266.2" r="1.25"/><circle cx="905.4" cy="273.4" r="1.25"/><circle cx="907.7" cy="266.2" r="1.25"/><circle cx="910.0" cy="285.5" r="1.25"/><circle cx="912.3" cy="266.2" r="1.25"/><circle cx="914.7" cy="266.2" r="1.25"/><circle cx="917.0" cy="266.2" r="1.25"/><circle cx="919.3" cy="266.2" r="1.25"/><circle cx="921.6" cy="266.2" r="1.25"/><circle cx="924.0" cy="266.2" r="1.25"/><circle cx="926.3" cy="266.2" r="1.25"/><circle cx="928.6" cy="266.2" r="1.25"/><circle cx="930.9" cy="266.2" r="1.25"/><circle cx="933.3" cy="266.2" r="1.25"/><circle cx="935.6" cy="266.2" r="1.25"/><circle cx="937.9" cy="266.2" r="1.25"/><circle cx="940.2" cy="266.2" r="1.25"/><circle cx="942.6" cy="266.2" r="1.25"/><circle cx="944.9" cy="266.2" r="1.25"/><circle cx="947.2" cy="266.2" r="1.25"/><circle cx="949.5" cy="266.2" r="1.25"/><circle cx="951.9" cy="266.2" r="1.25"/><circle cx="954.2" cy="266.2" r="1.25"/><circle cx="956.5" cy="266.2" r="1.25"/><circle cx="958.9" cy="266.2" r="1.25"/><circle cx="961.2" cy="266.2" r="1.25"/><circle cx="963.5" cy="266.2" r="1.25"/><circle cx="965.8" cy="266.2" r="1.25"/><circle cx="968.2" cy="266.2" r="1.25"/><circle cx="970.5" cy="266.2" r="1.25"/><circle cx="972.8" cy="266.2" r="1.25"/><circle cx="975.1" cy="266.2" r="1.25"/><circle cx="977.5" cy="266.2" r="1.25"/><circle cx="979.8" cy="266.2" r="1.25"/><circle cx="982.1" cy="266.2" r="1.25"/><circle cx="984.4" cy="266.2" r="1.25"/><circle cx="986.8" cy="270.2" r="1.25"/><circle cx="989.1" cy="266.2" r="1.25"/><circle cx="991.4" cy="266.2" r="1.25"/><circle cx="993.7" cy="379.2" r="1.25"/><circle cx="996.1" cy="275.9" r="1.25"/><circle cx="998.4" cy="266.2" r="1.25"/><circle cx="1000.7" cy="266.2" r="1.25"/><circle cx="1003.0" cy="266.2" r="1.25"/><circle cx="1005.4" cy="270.2" r="1.25"/><circle cx="1007.7" cy="266.2" r="1.25"/><circle cx="1010.0" cy="270.2" r="1.25"/><circle cx="1012.4" cy="266.2" r="1.25"/><circle cx="1014.7" cy="266.2" r="1.25"/><circle cx="1017.0" cy="285.5" r="1.25"/><circle cx="1019.3" cy="266.2" r="1.25"/><circle cx="1021.7" cy="266.2" r="1.25"/><circle cx="1024.0" cy="266.2" r="1.25"/><circle cx="1026.3" cy="266.2" r="1.25"/><circle cx="1028.6" cy="266.2" r="1.25"/><circle cx="1031.0" cy="266.2" r="1.25"/><circle cx="1033.3" cy="266.2" r="1.25"/><circle cx="1035.6" cy="266.2" r="1.25"/><circle cx="1037.9" cy="266.2" r="1.25"/><circle cx="1040.3" cy="266.2" r="1.25"/><circle cx="1042.6" cy="266.2" r="1.25"/><circle cx="1044.9" cy="266.2" r="1.25"/><circle cx="1047.2" cy="266.2" r="1.25"/><circle cx="1049.6" cy="266.2" r="1.25"/><circle cx="1051.9" cy="282.3" r="1.25"/><circle cx="1054.2" cy="298.4" r="1.25"/><circle cx="1056.5" cy="266.2" r="1.25"/></g>
</svg>
<div class="t" style="left:871.6px;top:448.08px;height:9.84px;line-height:9.84px;font-size:6.56px;color:#000;">准确率</div>
<div class="fd" style="left:907.2px;top:445.8px;width:36.8px;height:13.4px;line-height:11.4px;text-align:center;color:#1a1a1a;background:#f0f0f0;padding:0 0px;font-size:7px;">1.000000</div>
<div class="t" style="left:956px;top:448.08px;height:9.84px;line-height:9.84px;font-size:6.56px;color:#000;">损失值</div>
<div class="fd" style="left:991.2px;top:445.8px;width:37.8px;height:13.4px;line-height:11.4px;text-align:center;color:#1a1a1a;background:#f0f0f0;padding:0 0px;font-size:7px;">0.620387</div>
<div class="t" style="left:1042px;top:448.08px;height:9.84px;line-height:9.84px;font-size:6.56px;color:#000;">最优</div>
<div class="t" style="left:871.6px;top:465.28px;height:9.84px;line-height:9.84px;font-size:6.56px;color:#000;">mAP值</div>
<div class="fd" style="left:907.2px;top:463.2px;width:36.8px;height:13.2px;line-height:11.2px;text-align:center;color:#1a1a1a;background:#f0f0f0;padding:0 0px;font-size:7px;">98.969</div>
<div class="t" style="left:956px;top:465.28px;height:9.84px;line-height:9.84px;font-size:6.56px;color:#000;">mAP50值</div>
<div class="fd" style="left:991.2px;top:463.2px;width:37.8px;height:13.2px;line-height:11.2px;text-align:center;color:#1a1a1a;background:#f0f0f0;padding:0 0px;font-size:7px;">100.000</div>
<div class="t" style="left:1040.6px;top:465.28px;height:9.84px;line-height:9.84px;font-size:6.56px;color:#000;">mAP</div>
<div style="left:917.7px;top:535.2px;height:24px;line-height:24px;font-size:17.1px;font-weight:bold;letter-spacing:1.15px;-webkit-text-stroke:.55px currentColor;transform-origin:0 50%;transform:scaleX(1.232);color:#000"><span style="color:#d40000">zgznh.</span>com</div>
<div style="left:0px;top:568.6px;width:1050px;height:2.4px;background:#15202b"></div>
<div style="left:26px;top:568.6px;width:188px;height:2.4px;background:#fbfbfb"></div>
<div style="left:295px;top:568.6px;width:26px;height:2.4px;background:#3c4654"></div>
</body></html>
